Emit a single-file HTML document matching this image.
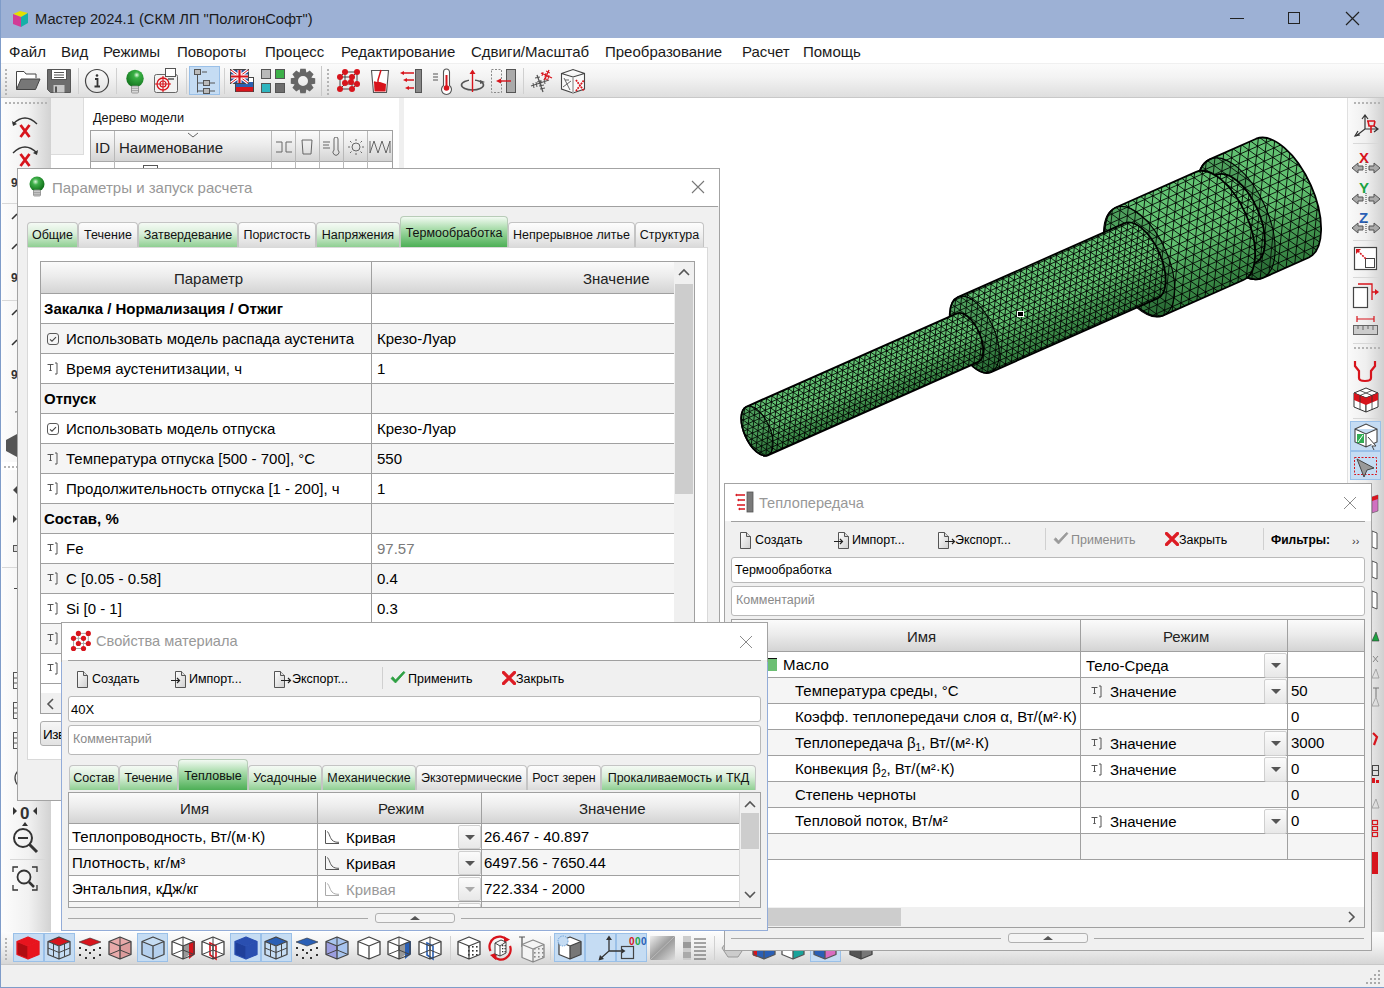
<!DOCTYPE html>
<html><head><meta charset="utf-8">
<style>
*{margin:0;padding:0;box-sizing:border-box}
html,body{width:1384px;height:988px;overflow:hidden;background:#fff;font-family:"Liberation Sans",sans-serif;color:#000}
.a{position:absolute}
.t{position:absolute;white-space:nowrap;line-height:1}
#title{left:0;top:0;width:1384px;height:38px;background:#9db1d5}
#menu{left:1px;top:38px;width:1383px;height:26px;background:#fff;border-bottom:1px solid #f0f0f0}
#menu .t{top:6px;font-size:15px;color:#1a1a1a}
#tb{left:1px;top:64px;width:1383px;height:34px;background:linear-gradient(#fbfbfb,#f3f3f3 40%,#dedede);border-bottom:1px solid #c8c8c8}
.sep{position:absolute;width:1px;background:#c8c8c8}
.hl{position:absolute;background:#cce0f5;border:1px solid #94bde8}
.grip{position:absolute;width:2px;background:repeating-linear-gradient(#a8a8a8 0 1px,transparent 1px 3px)}
.griph{position:absolute;height:2px;background:repeating-linear-gradient(90deg,#a8a8a8 0 1px,transparent 1px 3px)}
/* dialogs */
.dlg{position:absolute;background:#f0f0f0}
.bord{position:absolute;left:0;top:0;right:0;bottom:0;border:1px solid #a3a3a3;z-index:30}
.dlg .cap{position:absolute;left:0;top:0;right:0;background:#fff}
.dlg .capsep{position:absolute;height:1px;background:#a0a0a0}
.captxt{position:absolute;font-size:15px;color:#989898;white-space:nowrap;line-height:1}
.closex{position:absolute;width:16px;height:16px}
.tab{position:absolute;top:0;height:25px;border:1px solid #c4c4c4;border-bottom:none;border-radius:4px 4px 0 0;font-size:12.5px;text-align:center;line-height:24px;white-space:nowrap;color:#111}
.tg{background:linear-gradient(#f4faf4,#d8eed8 45%,#8fcf92)}
.tw{background:linear-gradient(#fdfdfd,#f0f0f0 50%,#dadada)}
.ts{background:linear-gradient(#f2faf2,#a9dcab 40%,#4daf56);border-color:#b8ccb8}
.hdr{position:absolute;background:linear-gradient(#fbfbfb,#ececec 45%,#d4d4d4);}
.row{position:absolute;border-bottom:1px solid #a0a0a0}
.rw{background:#fff}.rg{background:#f5f5f5}
.vl{position:absolute;width:1px;background:#a0a0a0}
.hln{position:absolute;height:1px;background:#a0a0a0}
.f15{font-size:15px}
.field{position:absolute;background:#fff;border:1px solid #b9b9b9;border-radius:3px}
.btnt{position:absolute;font-size:12.5px;white-space:nowrap;line-height:1;color:#000}
.dd{position:absolute;width:23px;background:linear-gradient(#fafafa,#e6e6e6);border:1px solid #c8c8c8;border-radius:2px}
.dd:after{content:"";position:absolute;left:6px;top:10px;border-left:5px solid transparent;border-right:5px solid transparent;border-top:5px solid #555}
</style></head><body>


<!-- window border -->
<div class="a" style="left:0;top:0;width:1px;height:988px;background:#7f9cc9;z-index:50"></div>
<div class="a" style="left:0;top:987px;width:1384px;height:1px;background:#7f9cc9;z-index:50"></div>

<!-- TITLE BAR -->
<div id="title" class="a">
  <svg class="a" style="left:11px;top:9px" width="19" height="19" viewBox="0 0 19 19">
    <path d="M2 5 L9 2 L17 4 L10 8 Z" fill="#e4e000"/>
    <path d="M2 5 L10 8 L10 18 L2 15 Z" fill="#d23c96"/>
    <path d="M10 8 L17 4 L17 14 L10 18 Z" fill="#17b0a8"/>
  </svg>
  <div class="t" style="left:35px;top:12px;font-size:14.7px;color:#1b1b1b">Мастер 2024.1 (СКМ ЛП "ПолигонСофт")</div>
  <div class="a" style="left:1230px;top:18px;width:14px;height:1px;background:#222"></div>
  <div class="a" style="left:1288px;top:12px;width:12px;height:12px;border:1px solid #222"></div>
  <svg class="a" style="left:1345px;top:11px" width="15" height="15"><path d="M1 1L14 14M14 1L1 14" stroke="#222" stroke-width="1.2"/></svg>
</div>

<!-- MENU -->
<div id="menu" class="a">
  <div class="t" style="left:8px">Файл</div>
  <div class="t" style="left:60px">Вид</div>
  <div class="t" style="left:102px">Режимы</div>
  <div class="t" style="left:176px">Повороты</div>
  <div class="t" style="left:264px">Процесс</div>
  <div class="t" style="left:340px">Редактирование</div>
  <div class="t" style="left:470px">Сдвиги/Масштаб</div>
  <div class="t" style="left:604px">Преобразование</div>
  <div class="t" style="left:741px">Расчет</div>
  <div class="t" style="left:802px">Помощь</div>
</div>

<!-- TOOLBAR -->
<div id="tb" class="a"></div>
<div id="tbicons"></div>

<!-- MAIN -->
<div class="a" id="leftbar" style="left:1px;top:98px;width:50px;height:834px;background:linear-gradient(90deg,#fdfdfd,#f1f1f1 55%,#d2d2d2)"></div>
<div class="a" style="left:51px;top:98px;width:33px;height:57px;background:#f0f0f0;border-right:1px solid #dcdcdc;border-bottom:1px solid #dcdcdc"></div>
<div class="a" style="left:399px;top:98px;width:5px;height:834px;background:#efefef"></div>

<!-- right toolbar -->
<div class="a" id="rightbar" style="left:1347px;top:98px;width:37px;height:834px;background:linear-gradient(90deg,#fafafa,#efefef 50%,#d0d0d0);border-left:1px solid #e0e0e0"></div>

<!-- bottom toolbar + status -->
<div class="a" style="left:1px;top:932px;width:1383px;height:33px;background:linear-gradient(#fcfcfc,#f0f0f0 45%,#d6d6d6);border-bottom:1px solid #c8c8c8"></div>
<div class="a" style="left:1px;top:965px;width:1383px;height:22px;background:#f0f0f0"></div>



<div class="dlg" style="left:17px;top:168px;width:703px;height:633px;z-index:10">
<div class="bord"></div>
<div class="cap" style="height:38px"></div>
<div class="capsep" style="left:0;top:38px;width:701px"></div>
<svg class="a" style="left:11px;top:8px" width="18" height="22" viewBox="0 0 18 22"><defs><radialGradient id="gb" cx="0.4" cy="0.35" r="0.6"><stop offset="0" stop-color="#d8f5d8"/><stop offset="0.35" stop-color="#3fb04a"/><stop offset="1" stop-color="#13741c"/></radialGradient></defs><circle cx="9" cy="8" r="7.5" fill="url(#gb)"/><rect x="5.5" y="14" width="7" height="6" rx="1" fill="#c9c9c9" stroke="#8a8a8a" stroke-width="0.8"/><path d="M5.5 16.5h7M5.5 18.3h7" stroke="#8a8a8a" stroke-width="0.6"/></svg>
<div class="captxt" style="left:35px;top:12px">Параметры и запуск расчета</div>
<svg class="a" style="left:674px;top:12px" width="14" height="14"><path d="M1 1L13 13M13 1L1 13" stroke="#777" stroke-width="1.1"/></svg>
<div class="a" style="left:10px;top:79px;width:681px;height:513px;background:#fff;border:1px solid #d9d9d9"></div>
<div class="tab tg" style="left:10px;top:54px;width:51px;height:25px;line-height:24px">Общие</div>
<div class="tab tw" style="left:61px;top:54px;width:60px;height:25px;line-height:24px">Течение</div>
<div class="tab tg" style="left:121px;top:54px;width:100px;height:25px;line-height:24px">Затвердевание</div>
<div class="tab tw" style="left:221px;top:54px;width:78px;height:25px;line-height:24px">Пористость</div>
<div class="tab tg" style="left:299px;top:54px;width:84px;height:25px;line-height:24px">Напряжения</div>
<div class="tab ts" style="left:383px;top:48px;width:108px;height:31px;line-height:33px">Термообработка</div>
<div class="tab tw" style="left:491px;top:54px;width:127px;height:25px;line-height:24px">Непрерывное литье</div>
<div class="tab tw" style="left:618px;top:54px;width:69px;height:25px;line-height:24px">Структура</div>
<div class="a" style="left:23px;top:93px;width:655px;height:453px;border:1px solid #a0a0a0;background:#fff;overflow:hidden">
<div class="hdr" style="left:0;top:0;width:633px;height:32px;border-bottom:1px solid #a0a0a0"></div>
<div class="t f15" style="left:133px;top:9px;color:#222">Параметр</div>
<div class="t f15" style="left:542px;top:9px;color:#222">Значение</div>
<div class="row rw" style="left:0;top:32px;width:633px;height:30px"></div>
<div class="t f15" style="left:3px;top:39px;font-weight:bold">Закалка / Нормализация / Отжиг</div>
<div class="row rg" style="left:0;top:62px;width:633px;height:30px"></div>
<div class="a" style="left:6px;top:71px;width:12px;height:12px;border:1.3px solid #5a5a5a;border-radius:3px"></div><svg class="a" style="left:8px;top:73px" width="8" height="8"><path d="M1 4.3L3 6.2L7 2.2" stroke="#444" stroke-width="1.1" fill="none"/></svg>
<div class="t f15" style="left:25px;top:69px">Использовать модель распада аустенита</div>
<div class="t f15" style="left:336px;top:69px;color:#000">Крезо-Луар</div>
<div class="row rw" style="left:0;top:92px;width:633px;height:30px"></div>
<svg class="a" style="left:6px;top:100px" width="12" height="13" viewBox="0 0 12 13"><path d="M0.5 2.5H6.5M3.5 2.5V8.5M2.3 8.5H4.7" stroke="#555" stroke-width="1" fill="none"/><path d="M8 1H10V12H8" stroke="#555" stroke-width="1" fill="none"/></svg>
<div class="t f15" style="left:25px;top:99px">Время аустенитизации, ч</div>
<div class="t f15" style="left:336px;top:99px;color:#000">1</div>
<div class="row rg" style="left:0;top:122px;width:633px;height:30px"></div>
<div class="t f15" style="left:3px;top:129px;font-weight:bold">Отпуск</div>
<div class="row rw" style="left:0;top:152px;width:633px;height:30px"></div>
<div class="a" style="left:6px;top:161px;width:12px;height:12px;border:1.3px solid #5a5a5a;border-radius:3px"></div><svg class="a" style="left:8px;top:163px" width="8" height="8"><path d="M1 4.3L3 6.2L7 2.2" stroke="#444" stroke-width="1.1" fill="none"/></svg>
<div class="t f15" style="left:25px;top:159px">Использовать модель отпуска</div>
<div class="t f15" style="left:336px;top:159px;color:#000">Крезо-Луар</div>
<div class="row rg" style="left:0;top:182px;width:633px;height:30px"></div>
<svg class="a" style="left:6px;top:190px" width="12" height="13" viewBox="0 0 12 13"><path d="M0.5 2.5H6.5M3.5 2.5V8.5M2.3 8.5H4.7" stroke="#555" stroke-width="1" fill="none"/><path d="M8 1H10V12H8" stroke="#555" stroke-width="1" fill="none"/></svg>
<div class="t f15" style="left:25px;top:189px">Температура отпуска [500 - 700], °C</div>
<div class="t f15" style="left:336px;top:189px;color:#000">550</div>
<div class="row rw" style="left:0;top:212px;width:633px;height:30px"></div>
<svg class="a" style="left:6px;top:220px" width="12" height="13" viewBox="0 0 12 13"><path d="M0.5 2.5H6.5M3.5 2.5V8.5M2.3 8.5H4.7" stroke="#555" stroke-width="1" fill="none"/><path d="M8 1H10V12H8" stroke="#555" stroke-width="1" fill="none"/></svg>
<div class="t f15" style="left:25px;top:219px">Продолжительность отпуска [1 - 200], ч</div>
<div class="t f15" style="left:336px;top:219px;color:#000">1</div>
<div class="row rg" style="left:0;top:242px;width:633px;height:30px"></div>
<div class="t f15" style="left:3px;top:249px;font-weight:bold">Состав, %</div>
<div class="row rw" style="left:0;top:272px;width:633px;height:30px"></div>
<svg class="a" style="left:6px;top:280px" width="12" height="13" viewBox="0 0 12 13"><path d="M0.5 2.5H6.5M3.5 2.5V8.5M2.3 8.5H4.7" stroke="#555" stroke-width="1" fill="none"/><path d="M8 1H10V12H8" stroke="#555" stroke-width="1" fill="none"/></svg>
<div class="t f15" style="left:25px;top:279px">Fe</div>
<div class="t f15" style="left:336px;top:279px;color:#7a7a7a">97.57</div>
<div class="row rg" style="left:0;top:302px;width:633px;height:30px"></div>
<svg class="a" style="left:6px;top:310px" width="12" height="13" viewBox="0 0 12 13"><path d="M0.5 2.5H6.5M3.5 2.5V8.5M2.3 8.5H4.7" stroke="#555" stroke-width="1" fill="none"/><path d="M8 1H10V12H8" stroke="#555" stroke-width="1" fill="none"/></svg>
<div class="t f15" style="left:25px;top:309px">C [0.05 - 0.58]</div>
<div class="t f15" style="left:336px;top:309px;color:#000">0.4</div>
<div class="row rw" style="left:0;top:332px;width:633px;height:30px"></div>
<svg class="a" style="left:6px;top:340px" width="12" height="13" viewBox="0 0 12 13"><path d="M0.5 2.5H6.5M3.5 2.5V8.5M2.3 8.5H4.7" stroke="#555" stroke-width="1" fill="none"/><path d="M8 1H10V12H8" stroke="#555" stroke-width="1" fill="none"/></svg>
<div class="t f15" style="left:25px;top:339px">Si [0 - 1]</div>
<div class="t f15" style="left:336px;top:339px;color:#000">0.3</div>
<div class="row rg" style="left:0;top:362px;width:633px;height:30px"></div>
<svg class="a" style="left:6px;top:370px" width="12" height="13" viewBox="0 0 12 13"><path d="M0.5 2.5H6.5M3.5 2.5V8.5M2.3 8.5H4.7" stroke="#555" stroke-width="1" fill="none"/><path d="M8 1H10V12H8" stroke="#555" stroke-width="1" fill="none"/></svg>
<div class="t f15" style="left:25px;top:369px"></div>
<div class="row rw" style="left:0;top:392px;width:633px;height:30px"></div>
<svg class="a" style="left:6px;top:400px" width="12" height="13" viewBox="0 0 12 13"><path d="M0.5 2.5H6.5M3.5 2.5V8.5M2.3 8.5H4.7" stroke="#555" stroke-width="1" fill="none"/><path d="M8 1H10V12H8" stroke="#555" stroke-width="1" fill="none"/></svg>
<div class="t f15" style="left:25px;top:399px"></div>
<div class="vl" style="left:330px;top:0;height:431px"></div>
<div class="a" style="left:633px;top:0;width:20px;height:431px;background:#f0f0f0"></div>
<svg class="a" style="left:637px;top:6px" width="12" height="8"><path d="M1 7L6 2L11 7" stroke="#555" stroke-width="1.6" fill="none"/></svg>
<div class="a" style="left:634px;top:22px;width:18px;height:210px;background:#cdcdcd"></div>
<div class="a" style="left:0;top:431px;width:633px;height:21px;background:#f0f0f0"></div>
<svg class="a" style="left:4px;top:436px" width="10" height="12"><path d="M8 1L3 6L8 11" stroke="#555" stroke-width="1.6" fill="none"/></svg>
</div>
<div class="a" style="left:23px;top:553px;width:120px;height:25px;border:1px solid #adadad;border-radius:3px;background:linear-gradient(#f6f6f6,#e2e2e2)"></div>
<div class="t" style="left:26px;top:560px;font-size:13.5px;letter-spacing:-0.4px">Известные</div>
</div>
<div class="dlg" style="left:61px;top:622px;width:707px;height:309px;z-index:20">
<div class="bord"></div>
<div class="a" style="left:0;top:40px;width:1px;height:269px;background:#93acd8;z-index:31"></div>
<div class="a" style="right:0;top:40px;width:1px;height:269px;background:#93acd8;z-index:31"></div>
<div class="a" style="left:0;bottom:0;width:707px;height:1px;background:#93acd8;z-index:31"></div>
<div class="cap" style="height:38px"></div>
<div class="capsep" style="left:7px;top:38px;width:693px"></div>
<svg class="a" style="left:3px;top:4px" width="30" height="28" viewBox="64 626 30 28"><path d="M78.4 633.4H88.3M73.5 638.3H83.5M78.4 643.5H88.3M73.5 648.5H83.5M73.5 638.3V648.5M83.5 638.3V648.5M78.4 633.4V643.5M88.3 633.4V643.5" stroke="#aaa" stroke-width="1"/><circle cx="78.4" cy="633.4" r="2.6" fill="#d7141c"/><circle cx="88.3" cy="633.4" r="2.6" fill="#d7141c"/><circle cx="73.5" cy="638.3" r="2.6" fill="#d7141c"/><circle cx="83.5" cy="638.3" r="2.6" fill="#d7141c"/><circle cx="78.4" cy="643.5" r="2.6" fill="#d7141c"/><circle cx="88.3" cy="643.5" r="2.6" fill="#d7141c"/><circle cx="73.5" cy="648.5" r="2.6" fill="#d7141c"/><circle cx="83.5" cy="648.5" r="2.6" fill="#d7141c"/></svg>
<div class="captxt" style="left:35px;top:12px;font-size:14.6px">Свойства материала</div>
<svg class="a" style="left:678px;top:13px" width="14" height="14"><path d="M1 1L13 13M13 1L1 13" stroke="#8a8a8a" stroke-width="1"/></svg>
<svg class="a" style="left:15px;top:49px" width="18" height="17" viewBox="0 0 18 17"><defs><linearGradient id="docg" x1="0" y1="0" x2="1" y2="1"><stop offset="0" stop-color="#fff"/><stop offset="1" stop-color="#cfcfcf"/></linearGradient></defs><path d="M1.5 0.5H7.5L11.5 4.5V16.5H1.5Z" fill="url(#docg)" stroke="#555" stroke-width="1"/><path d="M7.5 0.5V4.5H11.5" fill="#ddd" stroke="#555" stroke-width="1"/></svg>
<div class="btnt" style="left:31px;top:51px">Создать</div>
<svg class="a" style="left:110px;top:49px" width="18" height="17" viewBox="0 0 18 17"><defs><linearGradient id="docg" x1="0" y1="0" x2="1" y2="1"><stop offset="0" stop-color="#fff"/><stop offset="1" stop-color="#cfcfcf"/></linearGradient></defs><path d="M4.5 0.5H10.5L14.5 4.5V16.5H4.5Z" fill="url(#docg)" stroke="#555" stroke-width="1"/><path d="M10.5 0.5V4.5H14.5" fill="#ddd" stroke="#555" stroke-width="1"/><path d="M0 9.5H8M6 7L8.5 9.5L6 12" stroke="#222" stroke-width="1.2" fill="none"/></svg>
<div class="btnt" style="left:128px;top:51px">Импорт...</div>
<svg class="a" style="left:213px;top:49px" width="18" height="17" viewBox="0 0 18 17"><defs><linearGradient id="docg" x1="0" y1="0" x2="1" y2="1"><stop offset="0" stop-color="#fff"/><stop offset="1" stop-color="#cfcfcf"/></linearGradient></defs><path d="M0.5 0.5H6.5L10.5 4.5V16.5H0.5Z" fill="url(#docg)" stroke="#555" stroke-width="1"/><path d="M6.5 0.5V4.5H10.5" fill="#ddd" stroke="#555" stroke-width="1"/><path d="M7 9.5H16M14 7L16.5 9.5L14 12" stroke="#222" stroke-width="1.2" fill="none"/></svg>
<div class="btnt" style="left:231px;top:51px">Экспорт...</div>
<div class="a" style="left:321px;top:45px;width:1px;height:22px;background:#d0d0d0"></div>
<svg class="a" style="left:329px;top:49px" width="16" height="14" viewBox="0 0 16 14"><path d="M1 7.5L5.5 12L15 1.5L13.5 0.5L5.5 9L2.8 5.8Z" fill="#2ea043" stroke="#2ea043" stroke-width="0.8" stroke-linejoin="round"/></svg>
<div class="btnt" style="left:347px;top:51px">Применить</div>
<svg class="a" style="left:441px;top:49px" width="14" height="14" viewBox="0 0 14 14"><path d="M1.5 1.5L12.5 12.5M12.5 1.5L1.5 12.5" stroke="#dd1c24" stroke-width="3.2" stroke-linecap="round"/></svg>
<div class="btnt" style="left:455px;top:51px">Закрыть</div>
<div class="field" style="left:7px;top:74px;width:693px;height:26px"></div>
<div class="t" style="left:10px;top:81px;font-size:13px">40X</div>
<div class="field" style="left:7px;top:103px;width:693px;height:30px"></div>
<div class="t" style="left:12px;top:111px;font-size:12.5px;color:#8a8a8a">Комментарий</div>
<div class="tab tg" style="left:8px;top:143px;width:50px;height:25px;line-height:24px">Состав</div>
<div class="tab tg" style="left:58px;top:143px;width:59px;height:25px;line-height:24px">Течение</div>
<div class="tab ts" style="left:117px;top:137px;width:70px;height:31px;line-height:33px">Тепловые</div>
<div class="tab tg" style="left:187px;top:143px;width:74px;height:25px;line-height:24px">Усадочные</div>
<div class="tab tg" style="left:261px;top:143px;width:94px;height:25px;line-height:24px">Механические</div>
<div class="tab tw" style="left:355px;top:143px;width:111px;height:25px;line-height:24px">Экзотермические</div>
<div class="tab tw" style="left:466px;top:143px;width:74px;height:25px;line-height:24px">Рост зерен</div>
<div class="tab tg" style="left:540px;top:143px;width:155px;height:25px;line-height:24px">Прокаливаемость и ТКД</div>
<div class="a" style="left:7px;top:170px;width:693px;height:116px;border:1px solid #a0a0a0;background:#fff;overflow:hidden">
<div class="hdr" style="left:0;top:0;width:670px;height:31px;border-bottom:1px solid #a0a0a0"></div>
<div class="t f15" style="left:111px;top:8px;color:#222">Имя</div>
<div class="t f15" style="left:309px;top:8px;color:#222">Режим</div>
<div class="t f15" style="left:510px;top:8px;color:#222">Значение</div>
<div class="row rw" style="left:0;top:31px;width:670px;height:26px"></div>
<div class="t f15" style="left:3px;top:36px">Теплопроводность, Вт/(м·К)</div>
<svg class="a" style="left:255px;top:37px" width="16" height="15" viewBox="0 0 16 15"><path d="M1.5 0V13.5H15" stroke="#555" stroke-width="1" fill="none"/><path d="M3 1.5C5 2 5.5 7 8 10C10 12 12 12.3 15 12.3" stroke="#555" stroke-width="1" fill="none"/></svg>
<div class="t f15" style="left:277px;top:37px;color:#000">Кривая</div>
<div class="a" style="left:389px;top:32px;width:23px;height:24px;background:linear-gradient(#fbfbfb,#e8e8e8);border:1px solid #cfcfcf;border-radius:2px"><div class="a" style="left:6px;top:9px;border-left:5px solid transparent;border-right:5px solid transparent;border-top:5px solid #555"></div></div>
<div class="t f15" style="left:415px;top:36px">26.467 - 40.897</div>
<div class="row rg" style="left:0;top:57px;width:670px;height:26px"></div>
<div class="t f15" style="left:3px;top:62px">Плотность, кг/м³</div>
<svg class="a" style="left:255px;top:63px" width="16" height="15" viewBox="0 0 16 15"><path d="M1.5 0V13.5H15" stroke="#555" stroke-width="1" fill="none"/><path d="M3 1.5C5 2 5.5 7 8 10C10 12 12 12.3 15 12.3" stroke="#555" stroke-width="1" fill="none"/></svg>
<div class="t f15" style="left:277px;top:63px;color:#000">Кривая</div>
<div class="a" style="left:389px;top:58px;width:23px;height:24px;background:linear-gradient(#fbfbfb,#e8e8e8);border:1px solid #cfcfcf;border-radius:2px"><div class="a" style="left:6px;top:9px;border-left:5px solid transparent;border-right:5px solid transparent;border-top:5px solid #555"></div></div>
<div class="t f15" style="left:415px;top:62px">6497.56 - 7650.44</div>
<div class="row rw" style="left:0;top:83px;width:670px;height:26px"></div>
<div class="t f15" style="left:3px;top:88px">Энтальпия, кДж/кг</div>
<svg class="a" style="left:255px;top:89px" width="16" height="15" viewBox="0 0 16 15"><path d="M1.5 0V13.5H15" stroke="#aaa" stroke-width="1" fill="none"/><path d="M3 1.5C5 2 5.5 7 8 10C10 12 12 12.3 15 12.3" stroke="#aaa" stroke-width="1" fill="none"/></svg>
<div class="t f15" style="left:277px;top:89px;color:#999">Кривая</div>
<div class="a" style="left:389px;top:84px;width:23px;height:24px;background:linear-gradient(#fbfbfb,#e8e8e8);border:1px solid #cfcfcf;border-radius:2px"><div class="a" style="left:6px;top:9px;border-left:5px solid transparent;border-right:5px solid transparent;border-top:5px solid #aaa"></div></div>
<div class="t f15" style="left:415px;top:88px">722.334 - 2000</div>
<div class="row rg" style="left:0;top:109px;width:670px;height:26px"></div>
<div class="a" style="left:389px;top:110px;width:23px;height:24px;background:linear-gradient(#fbfbfb,#e8e8e8);border:1px solid #cfcfcf;border-radius:2px"><div class="a" style="left:6px;top:9px;border-left:5px solid transparent;border-right:5px solid transparent;border-top:5px solid #555"></div></div>
<div class="vl" style="left:248px;top:0;height:116px"></div>
<div class="vl" style="left:412px;top:0;height:116px"></div>
<div class="a" style="left:670px;top:0;width:22px;height:116px;background:#f0f0f0;border-left:1px solid #d8d8d8"></div>
<svg class="a" style="left:675px;top:7px" width="12" height="8"><path d="M1 7L6 2L11 7" stroke="#555" stroke-width="1.6" fill="none"/></svg>
<div class="a" style="left:672px;top:20px;width:18px;height:36px;background:#cdcdcd"></div>
<svg class="a" style="left:675px;top:98px" width="12" height="8"><path d="M1 1L6 6L11 1" stroke="#555" stroke-width="1.6" fill="none"/></svg>
</div>
<div class="a" style="left:7px;top:296px;width:300px;height:1px;background:#a8a8a8"></div>
<div class="a" style="left:400px;top:296px;width:300px;height:1px;background:#a8a8a8"></div>
<div class="a" style="left:314px;top:291px;width:80px;height:10px;background:#f4f4f4;border:1px solid #b0b0b0;border-radius:3px"></div>
<div class="a" style="left:349px;top:294px;border-left:5px solid transparent;border-right:5px solid transparent;border-bottom:4px solid #555"></div>
</div>
<div class="dlg" style="left:724px;top:483px;width:648px;height:468px;z-index:15">
<div class="bord"></div>
<div class="cap" style="height:38px"></div>
<div class="capsep" style="left:7px;top:38px;width:634px"></div>
<svg class="a" style="left:10px;top:8px" width="22" height="22" viewBox="0 0 22 22"><rect x="13" y="1" width="6" height="20" fill="#7a7a7a" stroke="#555" stroke-width="0.8"/><path d="M11 4H3M11 9H5M11 14H3M11 18H6" stroke="#d7141c" stroke-width="1.3"/><path d="M3 2.5L1 4L3 5.5ZM5 7.5L3 9L5 10.5ZM6 16.5L4 18L6 19.5Z" fill="#d7141c"/></svg>
<div class="captxt" style="left:35px;top:13px;font-size:14.6px">Теплопередача</div>
<svg class="a" style="left:619px;top:13px" width="14" height="14"><path d="M1 1L13 13M13 1L1 13" stroke="#8a8a8a" stroke-width="1"/></svg>
<svg class="a" style="left:15px;top:49px" width="18" height="17" viewBox="0 0 18 17"><defs><linearGradient id="docg" x1="0" y1="0" x2="1" y2="1"><stop offset="0" stop-color="#fff"/><stop offset="1" stop-color="#cfcfcf"/></linearGradient></defs><path d="M1.5 0.5H7.5L11.5 4.5V16.5H1.5Z" fill="url(#docg)" stroke="#555" stroke-width="1"/><path d="M7.5 0.5V4.5H11.5" fill="#ddd" stroke="#555" stroke-width="1"/></svg>
<div class="btnt" style="left:31px;top:51px">Создать</div>
<svg class="a" style="left:110px;top:49px" width="18" height="17" viewBox="0 0 18 17"><defs><linearGradient id="docg" x1="0" y1="0" x2="1" y2="1"><stop offset="0" stop-color="#fff"/><stop offset="1" stop-color="#cfcfcf"/></linearGradient></defs><path d="M4.5 0.5H10.5L14.5 4.5V16.5H4.5Z" fill="url(#docg)" stroke="#555" stroke-width="1"/><path d="M10.5 0.5V4.5H14.5" fill="#ddd" stroke="#555" stroke-width="1"/><path d="M0 9.5H8M6 7L8.5 9.5L6 12" stroke="#222" stroke-width="1.2" fill="none"/></svg>
<div class="btnt" style="left:128px;top:51px">Импорт...</div>
<svg class="a" style="left:214px;top:49px" width="18" height="17" viewBox="0 0 18 17"><defs><linearGradient id="docg" x1="0" y1="0" x2="1" y2="1"><stop offset="0" stop-color="#fff"/><stop offset="1" stop-color="#cfcfcf"/></linearGradient></defs><path d="M0.5 0.5H6.5L10.5 4.5V16.5H0.5Z" fill="url(#docg)" stroke="#555" stroke-width="1"/><path d="M6.5 0.5V4.5H10.5" fill="#ddd" stroke="#555" stroke-width="1"/><path d="M7 9.5H16M14 7L16.5 9.5L14 12" stroke="#222" stroke-width="1.2" fill="none"/></svg>
<div class="btnt" style="left:231px;top:51px">Экспорт...</div>
<div class="a" style="left:321px;top:45px;width:1px;height:22px;background:#d0d0d0"></div>
<svg class="a" style="left:329px;top:49px" width="16" height="14" viewBox="0 0 16 14"><path d="M1 7.5L5.5 12L15 1.5L13.5 0.5L5.5 9L2.8 5.8Z" fill="#9a9a9a" stroke="#9a9a9a" stroke-width="0.8" stroke-linejoin="round"/></svg>
<div class="btnt" style="left:347px;top:51px;color:#8a8a8a">Применить</div>
<svg class="a" style="left:441px;top:49px" width="14" height="14" viewBox="0 0 14 14"><path d="M1.5 1.5L12.5 12.5M12.5 1.5L1.5 12.5" stroke="#dd1c24" stroke-width="3.2" stroke-linecap="round"/></svg>
<div class="btnt" style="left:455px;top:51px">Закрыть</div>
<div class="a" style="left:539px;top:45px;width:1px;height:22px;background:#d0d0d0"></div>
<div class="btnt" style="left:547px;top:51px;font-weight:bold;font-size:12px">Фильтры:</div>
<div class="t" style="left:628px;top:53px;font-size:11px;color:#333">››</div>
<div class="field" style="left:7px;top:74px;width:634px;height:26px"></div>
<div class="t" style="left:11px;top:81px;font-size:12.5px">Термообработка</div>
<div class="field" style="left:7px;top:103px;width:634px;height:30px"></div>
<div class="t" style="left:12px;top:111px;font-size:12.5px;color:#8a8a8a">Комментарий</div>
<div class="a" style="left:7px;top:136px;width:634px;height:309px;border:1px solid #a0a0a0;background:#fff;overflow:hidden">
<div class="hdr" style="left:0;top:0;width:632px;height:32px;border-bottom:1px solid #a0a0a0"></div>
<div class="t f15" style="left:175px;top:9px;color:#222">Имя</div>
<div class="t f15" style="left:431px;top:9px;color:#222">Режим</div>
<div class="row rw" style="left:0;top:32px;width:632px;height:26px"></div>
<div class="a" style="left:35px;top:38px;width:10px;height:13px;background:#6cbf73;border-top:1px solid #111"></div>
<div class="t f15" style="left:51px;top:37px">Масло</div>
<div class="t f15" style="left:354px;top:38px">Тело-Среда</div>
<div class="a" style="left:532px;top:33px;width:23px;height:25px;background:linear-gradient(#fbfbfb,#e8e8e8);border:1px solid #cfcfcf;border-radius:2px"><div class="a" style="left:6px;top:9px;border-left:5px solid transparent;border-right:5px solid transparent;border-top:5px solid #555"></div></div>
<div class="row rg" style="left:0;top:58px;width:632px;height:26px"></div>
<div class="t f15" style="left:63px;top:63px">Температура среды, °C</div>
<svg class="a" style="left:359px;top:65px" width="12" height="13" viewBox="0 0 12 13"><path d="M0.5 2.5H6.5M3.5 2.5V8.5M2.3 8.5H4.7" stroke="#555" stroke-width="1" fill="none"/><path d="M8 1H10V12H8" stroke="#555" stroke-width="1" fill="none"/></svg>
<div class="t f15" style="left:378px;top:64px">Значение</div>
<div class="a" style="left:532px;top:59px;width:23px;height:25px;background:linear-gradient(#fbfbfb,#e8e8e8);border:1px solid #cfcfcf;border-radius:2px"><div class="a" style="left:6px;top:9px;border-left:5px solid transparent;border-right:5px solid transparent;border-top:5px solid #555"></div></div>
<div class="t f15" style="left:559px;top:63px">50</div>
<div class="row rw" style="left:0;top:84px;width:632px;height:26px"></div>
<div class="t f15" style="left:63px;top:89px">Коэфф. теплопередачи слоя α, Вт/(м²·К)</div>
<div class="t f15" style="left:559px;top:89px">0</div>
<div class="row rg" style="left:0;top:110px;width:632px;height:26px"></div>
<div class="t f15" style="left:63px;top:115px">Теплопередача β<span style='font-size:10px;position:relative;top:3px'>1</span>, Вт/(м²·К)</div>
<svg class="a" style="left:359px;top:117px" width="12" height="13" viewBox="0 0 12 13"><path d="M0.5 2.5H6.5M3.5 2.5V8.5M2.3 8.5H4.7" stroke="#555" stroke-width="1" fill="none"/><path d="M8 1H10V12H8" stroke="#555" stroke-width="1" fill="none"/></svg>
<div class="t f15" style="left:378px;top:116px">Значение</div>
<div class="a" style="left:532px;top:111px;width:23px;height:25px;background:linear-gradient(#fbfbfb,#e8e8e8);border:1px solid #cfcfcf;border-radius:2px"><div class="a" style="left:6px;top:9px;border-left:5px solid transparent;border-right:5px solid transparent;border-top:5px solid #555"></div></div>
<div class="t f15" style="left:559px;top:115px">3000</div>
<div class="row rw" style="left:0;top:136px;width:632px;height:26px"></div>
<div class="t f15" style="left:63px;top:141px">Конвекция β<span style='font-size:10px;position:relative;top:3px'>2</span>, Вт/(м²·К)</div>
<svg class="a" style="left:359px;top:143px" width="12" height="13" viewBox="0 0 12 13"><path d="M0.5 2.5H6.5M3.5 2.5V8.5M2.3 8.5H4.7" stroke="#555" stroke-width="1" fill="none"/><path d="M8 1H10V12H8" stroke="#555" stroke-width="1" fill="none"/></svg>
<div class="t f15" style="left:378px;top:142px">Значение</div>
<div class="a" style="left:532px;top:137px;width:23px;height:25px;background:linear-gradient(#fbfbfb,#e8e8e8);border:1px solid #cfcfcf;border-radius:2px"><div class="a" style="left:6px;top:9px;border-left:5px solid transparent;border-right:5px solid transparent;border-top:5px solid #555"></div></div>
<div class="t f15" style="left:559px;top:141px">0</div>
<div class="row rg" style="left:0;top:162px;width:632px;height:26px"></div>
<div class="t f15" style="left:63px;top:167px">Степень черноты</div>
<div class="t f15" style="left:559px;top:167px">0</div>
<div class="row rw" style="left:0;top:188px;width:632px;height:26px"></div>
<div class="t f15" style="left:63px;top:193px">Тепловой поток, Вт/м²</div>
<svg class="a" style="left:359px;top:195px" width="12" height="13" viewBox="0 0 12 13"><path d="M0.5 2.5H6.5M3.5 2.5V8.5M2.3 8.5H4.7" stroke="#555" stroke-width="1" fill="none"/><path d="M8 1H10V12H8" stroke="#555" stroke-width="1" fill="none"/></svg>
<div class="t f15" style="left:378px;top:194px">Значение</div>
<div class="a" style="left:532px;top:189px;width:23px;height:25px;background:linear-gradient(#fbfbfb,#e8e8e8);border:1px solid #cfcfcf;border-radius:2px"><div class="a" style="left:6px;top:9px;border-left:5px solid transparent;border-right:5px solid transparent;border-top:5px solid #555"></div></div>
<div class="t f15" style="left:559px;top:193px">0</div>
<div class="row rg" style="left:0;top:214px;width:632px;height:26px"></div>
<div class="vl" style="left:348px;top:0;height:239px"></div>
<div class="vl" style="left:555px;top:0;height:239px"></div>
<div class="a" style="left:0;top:287px;width:632px;height:20px;background:#f0f0f0"></div>
<div class="a" style="left:0;top:288px;width:169px;height:18px;background:#cdcdcd"></div>
<svg class="a" style="left:615px;top:291px" width="10" height="12"><path d="M2 1L7 6L2 11" stroke="#555" stroke-width="1.6" fill="none"/></svg>
</div>
<div class="a" style="left:7px;top:455px;width:270px;height:1px;background:#a8a8a8"></div>
<div class="a" style="left:370px;top:455px;width:270px;height:1px;background:#a8a8a8"></div>
<div class="a" style="left:284px;top:450px;width:80px;height:10px;background:#f4f4f4;border:1px solid #b0b0b0;border-radius:3px"></div>
<div class="a" style="left:319px;top:453px;border-left:5px solid transparent;border-right:5px solid transparent;border-bottom:4px solid #555"></div>
</div>
<svg class="a" style="left:0px;top:64px;z-index:2" width="600" height="34" viewBox="0 64 600 34"><rect x="5" y="69" width="2" height="2" fill="#b4b4b4"/><rect x="5" y="73" width="2" height="2" fill="#b4b4b4"/><rect x="5" y="77" width="2" height="2" fill="#b4b4b4"/><rect x="5" y="81" width="2" height="2" fill="#b4b4b4"/><rect x="5" y="85" width="2" height="2" fill="#b4b4b4"/><rect x="5" y="89" width="2" height="2" fill="#b4b4b4"/><rect x="5" y="93" width="2" height="2" fill="#b4b4b4"/><path d="M16.5 89.5V71.5H24L26 74H36V78" fill="#fff" stroke="#444" stroke-width="1"/><path d="M16.5 89.5L21 79H40L35.5 89.5Z" fill="#777" stroke="#444" stroke-width="1"/><path d="M47.5 69.5H70.5V92.5H50.5L47.5 89.5Z" fill="#6d6d6d" stroke="#555"/><rect x="51.5" y="69.5" width="15" height="10" fill="#fff" stroke="#555"/><path d="M54 72.5H64M54 75H64M54 77.5H64" stroke="#555"/><rect x="53.5" y="85" width="11" height="7.5" fill="#c8c8c8"/><rect x="55" y="86.5" width="2" height="6" fill="#555"/><rect x="78" y="68" width="1" height="26" fill="#d0d0d0"/><circle cx="97" cy="81" r="11.5" fill="none" stroke="#444" stroke-width="1.2"/><circle cx="97" cy="75.5" r="1.3" fill="#333"/><path d="M95 79H97.5V86.5M94.5 86.5H100" stroke="#333" stroke-width="1.8" fill="none"/><rect x="116" y="68" width="1" height="26" fill="#d0d0d0"/><defs><radialGradient id="gbt" cx="0.6" cy="0.3" r="0.7"><stop offset="0" stop-color="#e6fbe6"/><stop offset="0.25" stop-color="#39b044"/><stop offset="1" stop-color="#15761f"/></radialGradient></defs><circle cx="135" cy="78.5" r="8.7" fill="url(#gbt)"/><rect x="131.5" y="86" width="7" height="7" rx="1" fill="#ddd" stroke="#888" stroke-width="0.8"/><path d="M131.5 88.3H138.5M131.5 90.6H138.5" stroke="#888" stroke-width="0.7"/><rect x="154.5" y="74.5" width="23" height="18" rx="2" fill="#f2f2f2" stroke="#666"/><circle cx="163" cy="84" r="6" fill="none" stroke="#d7141c" stroke-width="1.3"/><circle cx="163" cy="84" r="3" fill="none" stroke="#d7141c" stroke-width="1.1"/><path d="M155 84H171M163 76V92" stroke="#d7141c" stroke-width="1.1"/><rect x="165.5" y="68.5" width="10" height="8" fill="#fff" stroke="#555"/><path d="M168 79H174" stroke="#555" stroke-width="1.5"/><rect x="186" y="68" width="1" height="26" fill="#d0d0d0"/><rect x="189.5" y="66.5" width="30" height="28" fill="#c5dcf3" stroke="#9ac0e8"/><rect x="194.5" y="69.5" width="6" height="5" fill="#bbb" stroke="#555"/><path d="M197.5 75V92.5M197.5 83H203M197.5 91H203M202 72H207M210 83H215M210 91H215" stroke="#555" stroke-width="1"/><rect x="203.5" y="80.5" width="6" height="5" fill="#bbb" stroke="#555"/><rect x="203.5" y="88.5" width="6" height="5" fill="#bbb" stroke="#555"/><rect x="224" y="68" width="1" height="26" fill="#d0d0d0"/><rect x="235.5" y="77.5" width="18" height="14" fill="#fff" stroke="#444"/><rect x="236" y="82" width="17" height="5" fill="#2a5fb0"/><rect x="236" y="87" width="17" height="4.5" fill="#d7141c"/><rect x="230.5" y="69.5" width="18" height="14" fill="#2a4f9a" stroke="#444"/><path d="M231 70L248 83M248 70L231 83" stroke="#fff" stroke-width="3"/><path d="M231 70L248 83M248 70L231 83" stroke="#d7141c" stroke-width="1"/><path d="M239.5 70V83M231 76.5H248" stroke="#fff" stroke-width="4"/><path d="M239.5 70V83M231 76.5H248" stroke="#d7141c" stroke-width="2.2"/><rect x="261.5" y="69.5" width="9" height="9" fill="#b9b9b9" stroke="#555"/><rect x="275.5" y="69.5" width="9" height="9" fill="#3db049" stroke="#555"/><rect x="261.5" y="83.5" width="9" height="9" fill="#2fb5bf" stroke="#555"/><rect x="275.5" y="83.5" width="9" height="9" fill="#6d6d6d" stroke="#555"/><path d="M315.2 78.3 L315.2 83.7 L311.7 84.3 L311.5 84.8 L313.6 87.7 L309.7 91.6 L306.8 89.5 L306.3 89.7 L305.7 93.2 L300.3 93.2 L299.7 89.7 L299.2 89.5 L296.3 91.6 L292.4 87.7 L294.5 84.8 L294.3 84.3 L290.8 83.7 L290.8 78.3 L294.3 77.7 L294.5 77.2 L292.4 74.3 L296.3 70.4 L299.2 72.5 L299.7 72.3 L300.3 68.8 L305.7 68.8 L306.3 72.3 L306.8 72.5 L309.7 70.4 L313.6 74.3 L311.5 77.2 L311.7 77.7Z M308 81 A5 5 0 1 0 298 81 A5 5 0 1 0 308 81Z" fill="#666" fill-rule="evenodd"/><rect x="321" y="66" width="1" height="30" fill="#c8c8c8"/><rect x="327" y="69" width="2" height="2" fill="#b4b4b4"/><rect x="327" y="73" width="2" height="2" fill="#b4b4b4"/><rect x="327" y="77" width="2" height="2" fill="#b4b4b4"/><rect x="327" y="81" width="2" height="2" fill="#b4b4b4"/><rect x="327" y="85" width="2" height="2" fill="#b4b4b4"/><rect x="327" y="89" width="2" height="2" fill="#b4b4b4"/><rect x="327" y="93" width="2" height="2" fill="#b4b4b4"/><path d="M345 72H357V84M340 77H352V89H340ZM345 72L340 77M357 72L352 77M357 84L352 89M345 72V84L340 89M345 84H357" stroke="#444" stroke-width="1" fill="none"/><circle cx="345" cy="72" r="3" fill="#d7141c"/><circle cx="357" cy="72" r="3" fill="#d7141c"/><circle cx="340" cy="77" r="3" fill="#d7141c"/><circle cx="352" cy="77" r="3" fill="#d7141c"/><circle cx="351" cy="82" r="3" fill="#d7141c"/><circle cx="357" cy="84" r="3" fill="#d7141c"/><circle cx="340" cy="89" r="3" fill="#d7141c"/><circle cx="352" cy="89" r="3" fill="#d7141c"/><circle cx="345" cy="83" r="3" fill="#d7141c"/><path d="M371.5 70.5H388.5L386.5 92.5H373.5Z" fill="#fff" stroke="#555" stroke-width="1.1"/><path d="M374 82L378 83V80L381 70" stroke="#d7141c" stroke-width="1.5" fill="none"/><path d="M374 82H380L386 84L385.5 91.5H374.5Z" fill="#d7141c"/><rect x="415.5" y="69.5" width="6" height="23" fill="#888" stroke="#555"/><path d="M414 73H402M414 80H405M414 88H407" stroke="#d7141c" stroke-width="1.4"/><path d="M400 73L404 71V75ZM403 80L407 78V82ZM405 88L409 86V90Z" fill="#d7141c"/><path d="M433 74H438M433 77H438M433 80H438" stroke="#555" stroke-width="1.2"/><path d="M443.5 72A3 3 0 0 1 449.5 72V85.5A5 5 0 1 1 443.5 85.5Z" fill="#fff" stroke="#555" stroke-width="1.1"/><path d="M446.5 75V87" stroke="#d7141c" stroke-width="2"/><circle cx="446.5" cy="88" r="2.8" fill="#d7141c"/><ellipse cx="472.5" cy="85" rx="11" ry="5" fill="none" stroke="#555" stroke-width="1.6"/><path d="M480 80L485 82L480 84Z" fill="#555"/><rect x="469" y="79" width="6" height="3" fill="#f2f2f2"/><path d="M472.5 72V92" stroke="#d7141c" stroke-width="1.4"/><path d="M469.5 74L472.5 69.5L475.5 74Z" fill="#d7141c"/><rect x="491.5" y="69.5" width="10" height="23" fill="none" stroke="#888" stroke-dasharray="2 1.5"/><rect x="506.5" y="69.5" width="9" height="23" fill="#aaa" stroke="#555"/><path d="M511 81H498" stroke="#d7141c" stroke-width="1.4"/><path d="M496 81L501 78.5V83.5Z" fill="#d7141c"/><rect x="523" y="68" width="1" height="26" fill="#d0d0d0"/><path d="M531 86L549 80M537 75L543 92" stroke="#555" stroke-width="1.3"/><path d="M533 83L534 88M536 82L537 87M540 80L541 85M544 79L545 84M535 78L540 77M537 82L542 81M539 86L544 85M540 89L545 88" stroke="#555" stroke-width="1"/><path d="M541 73L552 78M549 70L544.5 80" stroke="#d7141c" stroke-width="1.3"/><path d="M543 72L542 76M546 73L545 77M549 75L548 79M546 71L550 73M545 75L549 77M544 78L548 80" stroke="#d7141c" stroke-width="1"/><path d="M561.5 73.5L573 69.5L584.5 73.5V89L573 93L561.5 89Z M561.5 73.5L573 77L584.5 73.5" fill="#fafafa" stroke="#444" stroke-width="1.1"/><path d="M573 77V93" stroke="#aaa" stroke-width="1.6"/><path d="M564 78L570 90M563 87L571 81M565 80L569 80" stroke="#666" stroke-width="1"/><path d="M576 80L584 91M576 91L584 80" stroke="#d7141c" stroke-width="1.8" stroke-dasharray="1.8 1"/></svg>
<svg class="a" style="left:700px;top:100px;z-index:1" width="647" height="383" viewBox="700 100 647 383"><defs><clipPath id="c524"><path d="M1256.2 138.7 L1209.6 159.4 A65.0 31.8 66.1 0 0 1262.3 278.2 L1308.9 257.5 A65.0 31.8 66.1 0 0 1256.2 138.7 Z"/></clipPath><linearGradient id="g524" gradientUnits="userSpaceOnUse" x1="1209.6" y1="159.4" x2="1262.3" y2="278.2"><stop offset="0" stop-color="#62c272"/><stop offset="0.5" stop-color="#60bf6f"/><stop offset="1" stop-color="#2f7a3b"/></linearGradient></defs><path d="M1256.2 138.7 L1209.6 159.4 A65.0 31.8 66.1 0 0 1262.3 278.2 L1308.9 257.5 A65.0 31.8 66.1 0 0 1256.2 138.7 Z" fill="url(#g524)"/><path d="M1086.7 141.0L1325.2 35.3M1090.0 148.5L1328.5 42.8M1093.3 156.0L1331.9 50.3M1096.7 163.6L1335.2 57.8M1100.0 171.1L1338.5 65.4M1103.3 178.6L1341.9 72.9M1106.6 186.1L1345.2 80.4M1110.0 193.6L1348.5 87.9M1113.3 201.1L1351.9 95.4M1116.6 208.7L1355.2 103.0M1120.0 216.2L1358.5 110.5M1123.3 223.7L1361.9 118.0M1126.6 231.2L1365.2 125.5M1130.0 238.7L1368.5 133.0M1133.3 246.3L1371.9 140.6M1136.6 253.8L1375.2 148.1M1140.0 261.3L1378.5 155.6M1143.3 268.8L1381.9 163.1M1146.6 276.3L1385.2 170.6M1150.0 283.9L1388.5 178.2M1153.3 291.4L1391.8 185.7M1156.6 298.9L1395.2 193.2M1160.0 306.4L1398.5 200.7M1163.3 313.9L1401.8 208.2M1166.6 321.5L1405.2 215.8M1170.0 329.0L1408.5 223.3M1173.3 336.5L1411.8 230.8M1176.6 344.0L1415.2 238.3M1179.9 351.5L1418.5 245.8M1183.3 359.1L1421.8 253.4M1186.6 366.6L1425.2 260.9M1189.9 374.1L1428.5 268.4M1193.3 381.6L1431.8 275.9M1231.0 25.3L1442.2 178.7M1226.2 31.9L1437.4 185.3M1221.4 38.6L1432.5 192.0M1216.5 45.2L1427.7 198.6M1211.7 51.9L1422.8 205.3M1206.9 58.5L1418.0 211.9M1202.0 65.2L1413.2 218.6M1197.2 71.8L1408.3 225.3M1192.4 78.5L1403.5 231.9M1187.5 85.2L1398.7 238.6M1182.7 91.8L1393.8 245.2M1177.8 98.5L1389.0 251.9M1173.0 105.1L1384.2 258.5M1168.2 111.8L1379.3 265.2M1163.3 118.4L1374.5 271.8M1158.5 125.1L1369.7 278.5M1153.7 131.7L1364.8 285.2M1148.8 138.4L1360.0 291.8M1144.0 145.1L1355.1 298.5M1139.2 151.7L1350.3 305.1M1134.3 158.4L1345.5 311.8M1129.5 165.0L1340.6 318.4M1124.7 171.7L1335.8 325.1M1119.8 178.3L1331.0 331.7M1115.0 185.0L1326.1 338.4M1110.1 191.6L1321.3 345.1M1105.3 198.3L1316.5 351.7M1100.5 205.0L1311.6 358.4M1095.6 211.6L1306.8 365.0M1090.8 218.3L1302.0 371.7M1086.0 224.9L1297.1 378.3M1081.1 231.6L1292.3 385.0M1076.3 238.2L1287.4 391.7M1403.8 92.4L1376.5 352.0M1395.6 91.6L1368.3 351.1M1387.4 90.7L1360.1 350.3M1379.2 89.8L1352.0 349.4M1371.1 89.0L1343.8 348.6M1362.9 88.1L1335.6 347.7M1354.7 87.3L1327.4 346.8M1346.5 86.4L1319.2 346.0M1338.3 85.5L1311.1 345.1M1330.2 84.7L1302.9 344.3M1322.0 83.8L1294.7 343.4M1313.8 83.0L1286.5 342.5M1305.6 82.1L1278.3 341.7M1297.4 81.2L1270.1 340.8M1289.2 80.4L1262.0 340.0M1281.1 79.5L1253.8 339.1M1272.9 78.7L1245.6 338.2M1264.7 77.8L1237.4 337.4M1256.5 76.9L1229.2 336.5M1248.3 76.1L1221.1 335.7M1240.2 75.2L1212.9 334.8M1232.0 74.4L1204.7 333.9M1223.8 73.5L1196.5 333.1M1215.6 72.6L1188.3 332.2M1207.4 71.8L1180.1 331.4M1199.2 70.9L1172.0 330.5M1191.1 70.1L1163.8 329.6M1182.9 69.2L1155.6 328.8M1174.7 68.3L1147.4 327.9M1166.5 67.5L1139.2 327.1M1158.3 66.6L1131.1 326.2M1150.2 65.8L1122.9 325.3M1142.0 64.9L1114.7 324.5" stroke="#000" stroke-width="0.95" opacity="0.92" clip-path="url(#c524)" fill="none"/><ellipse cx="1235.9" cy="218.8" rx="65.0" ry="31.8" transform="rotate(66.1 1235.9 218.8)" fill="#0a2a10" fill-opacity="0.22" stroke="#000" stroke-width="1.1"/><path d="M1256.2 138.7 L1209.6 159.4 A65.0 31.8 66.1 0 0 1262.3 278.2 L1308.9 257.5 A65.0 31.8 66.1 0 0 1256.2 138.7 Z" fill="none" stroke="#000" stroke-width="1.8"/><defs><clipPath id="c506"><path d="M1216.5 174.9 L1200.0 182.2 A48.0 23.5 66.1 0 0 1238.9 269.9 L1255.4 262.7 A48.0 23.5 66.1 0 0 1216.5 174.9 Z"/></clipPath><linearGradient id="g506" gradientUnits="userSpaceOnUse" x1="1200.0" y1="182.2" x2="1238.9" y2="269.9"><stop offset="0" stop-color="#62c272"/><stop offset="0.5" stop-color="#60bf6f"/><stop offset="1" stop-color="#2f7a3b"/></linearGradient></defs><path d="M1216.5 174.9 L1200.0 182.2 A48.0 23.5 66.1 0 0 1238.9 269.9 L1255.4 262.7 A48.0 23.5 66.1 0 0 1216.5 174.9 Z" fill="url(#g506)"/><path d="M1097.3 167.5L1274.6 88.9M1099.8 173.1L1277.1 94.5M1102.2 178.6L1279.5 100.0M1104.7 184.1L1282.0 105.6M1107.1 189.7L1284.5 111.1M1109.6 195.2L1286.9 116.7M1112.0 200.8L1289.4 122.2M1114.5 206.3L1291.8 127.7M1117.0 211.8L1294.3 133.3M1119.4 217.4L1296.7 138.8M1121.9 222.9L1299.2 144.4M1124.3 228.5L1301.6 149.9M1126.8 234.0L1304.1 155.4M1129.2 239.5L1306.5 161.0M1131.7 245.1L1309.0 166.5M1134.1 250.6L1311.5 172.1M1136.6 256.2L1313.9 177.6M1139.1 261.7L1316.4 183.1M1141.5 267.3L1318.8 188.7M1144.0 272.8L1321.3 194.2M1146.4 278.3L1323.7 199.8M1148.9 283.9L1326.2 205.3M1151.3 289.4L1328.6 210.8M1153.8 295.0L1331.1 216.4M1156.2 300.5L1333.6 221.9M1158.7 306.0L1336.0 227.5M1161.1 311.6L1338.5 233.0M1163.6 317.1L1340.9 238.5M1166.1 322.7L1343.4 244.1M1168.5 328.2L1345.8 249.6M1171.0 333.7L1348.3 255.2M1173.4 339.3L1350.7 260.7M1175.9 344.8L1353.2 266.3M1178.3 350.4L1355.6 271.8M1180.8 355.9L1358.1 277.3M1209.8 82.0L1366.8 196.1M1206.2 86.9L1363.2 201.0M1202.7 91.8L1359.6 205.9M1199.1 96.8L1356.1 210.8M1195.6 101.7L1352.5 215.7M1192.0 106.6L1348.9 220.6M1188.4 111.5L1345.4 225.5M1184.9 116.4L1341.8 230.4M1181.3 121.3L1338.3 235.3M1177.7 126.2L1334.7 240.2M1174.2 131.1L1331.1 245.1M1170.6 136.0L1327.6 250.0M1167.1 140.9L1324.0 254.9M1163.5 145.8L1320.4 259.8M1159.9 150.7L1316.9 264.7M1156.4 155.6L1313.3 269.6M1152.8 160.5L1309.7 274.5M1149.2 165.4L1306.2 279.4M1145.7 170.3L1302.6 284.3M1142.1 175.2L1299.1 289.2M1138.5 180.1L1295.5 294.2M1135.0 185.0L1291.9 299.1M1131.4 189.9L1288.4 304.0M1127.9 194.8L1284.8 308.9M1124.3 199.7L1281.2 313.8M1120.7 204.6L1277.7 318.7M1117.2 209.5L1274.1 323.6M1113.6 214.5L1270.6 328.5M1110.0 219.4L1267.0 333.4M1106.5 224.3L1263.4 338.3M1102.9 229.2L1259.9 343.2M1099.4 234.1L1256.3 348.1M1095.8 239.0L1252.7 353.0M1092.2 243.9L1249.2 357.9M1088.7 248.8L1245.6 362.8M1340.3 136.7L1320.1 329.7M1334.3 136.1L1314.0 329.0M1328.3 135.5L1308.0 328.4M1322.3 134.8L1302.0 327.8M1316.2 134.2L1295.9 327.1M1310.2 133.6L1289.9 326.5M1304.2 132.9L1283.9 325.9M1298.1 132.3L1277.9 325.2M1292.1 131.7L1271.8 324.6M1286.1 131.0L1265.8 324.0M1280.1 130.4L1259.8 323.3M1274.0 129.8L1253.7 322.7M1268.0 129.1L1247.7 322.1M1262.0 128.5L1241.7 321.4M1255.9 127.9L1235.7 320.8M1249.9 127.2L1229.6 320.2M1243.9 126.6L1223.6 319.5M1237.8 126.0L1217.6 318.9M1231.8 125.3L1211.5 318.3M1225.8 124.7L1205.5 317.6M1219.8 124.1L1199.5 317.0M1213.7 123.4L1193.5 316.4M1207.7 122.8L1187.4 315.7M1201.7 122.2L1181.4 315.1M1195.6 121.5L1175.4 314.5M1189.6 120.9L1169.3 313.8M1183.6 120.3L1163.3 313.2M1177.6 119.6L1157.3 312.6M1171.5 119.0L1151.3 311.9M1165.5 118.4L1145.2 311.3M1159.5 117.7L1139.2 310.7M1153.4 117.1L1133.2 310.0M1147.4 116.5L1127.1 309.4M1141.4 115.8L1121.1 308.8M1135.4 115.2L1115.1 308.1" stroke="#000" stroke-width="0.95" opacity="0.92" clip-path="url(#c506)" fill="none"/><ellipse cx="1219.5" cy="226.1" rx="48.0" ry="23.5" transform="rotate(66.1 1219.5 226.1)" fill="#0a2a10" fill-opacity="0.22" stroke="#000" stroke-width="1.1"/><path d="M1216.5 174.9 L1200.0 182.2 A48.0 23.5 66.1 0 0 1238.9 269.9 L1255.4 262.7 A48.0 23.5 66.1 0 0 1216.5 174.9 Z" fill="none" stroke="#000" stroke-width="1.8"/><defs><clipPath id="c418"><path d="M1195.6 172.1 L1115.2 207.8 A59.0 28.9 66.1 0 0 1162.9 315.6 L1243.4 280.0 A59.0 28.9 66.1 0 0 1195.6 172.1 Z"/></clipPath><linearGradient id="g418" gradientUnits="userSpaceOnUse" x1="1115.2" y1="207.8" x2="1162.9" y2="315.6"><stop offset="0" stop-color="#62c272"/><stop offset="0.5" stop-color="#60bf6f"/><stop offset="1" stop-color="#2f7a3b"/></linearGradient></defs><path d="M1195.6 172.1 L1115.2 207.8 A59.0 28.9 66.1 0 0 1162.9 315.6 L1243.4 280.0 A59.0 28.9 66.1 0 0 1195.6 172.1 Z" fill="url(#g418)"/><path d="M988.6 166.5L1250.0 50.6M991.7 173.6L1253.2 57.7M994.9 180.7L1256.3 64.9M998.1 187.8L1259.5 72.0M1001.2 194.9L1262.6 79.1M1004.4 202.1L1265.8 86.2M1007.5 209.2L1268.9 93.4M1010.7 216.3L1272.1 100.5M1013.8 223.4L1275.2 107.6M1017.0 230.6L1278.4 114.7M1020.2 237.7L1281.6 121.9M1023.3 244.8L1284.7 129.0M1026.5 251.9L1287.9 136.1M1029.6 259.1L1291.0 143.2M1032.8 266.2L1294.2 150.4M1035.9 273.3L1297.3 157.5M1039.1 280.4L1300.5 164.6M1042.3 287.6L1303.7 171.7M1045.4 294.7L1306.8 178.9M1048.6 301.8L1310.0 186.0M1051.7 308.9L1313.1 193.1M1054.9 316.1L1316.3 200.2M1058.0 323.2L1319.4 207.3M1061.2 330.3L1322.6 214.5M1064.3 337.4L1325.8 221.6M1067.5 344.5L1328.9 228.7M1070.7 351.7L1332.1 235.8M1073.8 358.8L1335.2 243.0M1077.0 365.9L1338.4 250.1M1080.1 373.0L1341.5 257.2M1083.3 380.2L1344.7 264.3M1086.4 387.3L1347.8 271.5M1089.6 394.4L1351.0 278.6M1092.8 401.5L1354.2 285.7M1095.9 408.7L1357.3 292.8M1099.1 415.8L1360.5 300.0M1102.2 422.9L1363.6 307.1M1105.4 430.0L1366.8 314.2M1108.5 437.2L1369.9 321.3M1150.6 40.0L1382.0 208.1M1146.0 46.3L1377.4 214.4M1141.5 52.6L1372.8 220.8M1136.9 58.9L1368.3 227.1M1132.3 65.3L1363.7 233.4M1127.7 71.6L1359.1 239.7M1123.1 77.9L1354.5 246.0M1118.6 84.2L1349.9 252.3M1114.0 90.5L1345.4 258.6M1109.4 96.8L1340.8 264.9M1104.8 103.1L1336.2 271.2M1100.2 109.4L1331.6 277.5M1095.6 115.7L1327.0 283.8M1091.1 122.0L1322.4 290.1M1086.5 128.3L1317.9 296.4M1081.9 134.6L1313.3 302.7M1077.3 140.9L1308.7 309.0M1072.7 147.2L1304.1 315.3M1068.2 153.5L1299.5 321.6M1063.6 159.8L1295.0 327.9M1059.0 166.1L1290.4 334.2M1054.4 172.4L1285.8 340.6M1049.8 178.8L1281.2 346.9M1045.3 185.1L1276.6 353.2M1040.7 191.4L1272.1 359.5M1036.1 197.7L1267.5 365.8M1031.5 204.0L1262.9 372.1M1026.9 210.3L1258.3 378.4M1022.3 216.6L1253.7 384.7M1017.8 222.9L1249.1 391.0M1013.2 229.2L1244.6 397.3M1008.6 235.5L1240.0 403.6M1004.0 241.8L1235.4 409.9M999.4 248.1L1230.8 416.2M994.9 254.4L1226.2 422.5M990.3 260.7L1221.7 428.8M985.7 267.0L1217.1 435.1M981.1 273.3L1212.5 441.4M976.5 279.6L1207.9 447.7M1341.5 117.2L1311.6 401.6M1333.7 116.3L1303.8 400.8M1326.0 115.5L1296.1 400.0M1318.2 114.7L1288.3 399.1M1310.5 113.9L1280.6 398.3M1302.7 113.1L1272.8 397.5M1295.0 112.3L1265.1 396.7M1287.2 111.4L1257.3 395.9M1279.5 110.6L1249.6 395.1M1271.7 109.8L1241.8 394.3M1264.0 109.0L1234.1 393.4M1256.2 108.2L1226.3 392.6M1248.5 107.4L1218.6 391.8M1240.7 106.6L1210.8 391.0M1233.0 105.7L1203.1 390.2M1225.2 104.9L1195.3 389.4M1217.5 104.1L1187.6 388.6M1209.7 103.3L1179.8 387.7M1202.0 102.5L1172.1 386.9M1194.2 101.7L1164.3 386.1M1186.5 100.9L1156.6 385.3M1178.7 100.0L1148.8 384.5M1171.0 99.2L1141.1 383.7M1163.2 98.4L1133.3 382.8M1155.5 97.6L1125.6 382.0M1147.7 96.8L1117.8 381.2M1140.0 96.0L1110.1 380.4M1132.2 95.2L1102.3 379.6M1124.5 94.3L1094.6 378.8M1116.7 93.5L1086.8 378.0M1109.0 92.7L1079.1 377.1M1101.2 91.9L1071.3 376.3M1093.4 91.1L1063.6 375.5M1085.7 90.3L1055.8 374.7M1077.9 89.5L1048.1 373.9M1070.2 88.6L1040.3 373.1M1062.4 87.8L1032.5 372.3M1054.7 87.0L1024.8 371.4M1046.9 86.2L1017.0 370.6" stroke="#000" stroke-width="0.95" opacity="0.92" clip-path="url(#c418)" fill="none"/><ellipse cx="1139.1" cy="261.7" rx="59.0" ry="28.9" transform="rotate(66.1 1139.1 261.7)" fill="#0a2a10" fill-opacity="0.22" stroke="#000" stroke-width="1.1"/><path d="M1195.6 172.1 L1115.2 207.8 A59.0 28.9 66.1 0 0 1162.9 315.6 L1243.4 280.0 A59.0 28.9 66.1 0 0 1195.6 172.1 Z" fill="none" stroke="#000" stroke-width="1.8"/><defs><clipPath id="c238"><path d="M1124.3 223.4 L957.9 297.1 A41.0 20.1 66.1 0 0 991.1 372.1 L1157.5 298.4 A41.0 20.1 66.1 0 0 1124.3 223.4 Z"/></clipPath><linearGradient id="g238" gradientUnits="userSpaceOnUse" x1="957.9" y1="297.1" x2="991.1" y2="372.1"><stop offset="0" stop-color="#62c272"/><stop offset="0.5" stop-color="#60bf6f"/><stop offset="1" stop-color="#2f7a3b"/></linearGradient></defs><path d="M1124.3 223.4 L957.9 297.1 A41.0 20.1 66.1 0 0 991.1 372.1 L1157.5 298.4 A41.0 20.1 66.1 0 0 1124.3 223.4 Z" fill="url(#g238)"/><path d="M829.8 207.9L1144.2 68.6M832.1 213.1L1146.5 73.7M834.4 218.2L1148.8 78.9M836.7 223.4L1151.1 84.0M838.9 228.5L1153.4 89.2M841.2 233.6L1155.6 94.3M843.5 238.8L1157.9 99.5M845.8 243.9L1160.2 104.6M848.1 249.1L1162.5 109.8M850.3 254.2L1164.8 114.9M852.6 259.4L1167.0 120.1M854.9 264.5L1169.3 125.2M857.2 269.7L1171.6 130.3M859.5 274.8L1173.9 135.5M861.7 280.0L1176.2 140.6M864.0 285.1L1178.4 145.8M866.3 290.2L1180.7 150.9M868.6 295.4L1183.0 156.1M870.9 300.5L1185.3 161.2M873.1 305.7L1187.6 166.4M875.4 310.8L1189.8 171.5M877.7 316.0L1192.1 176.6M880.0 321.1L1194.4 181.8M882.3 326.3L1196.7 186.9M884.5 331.4L1199.0 192.1M886.8 336.5L1201.2 197.2M889.1 341.7L1203.5 202.4M891.4 346.8L1205.8 207.5M893.7 352.0L1208.1 212.7M895.9 357.1L1210.4 217.8M898.2 362.3L1212.6 223.0M900.5 367.4L1214.9 228.1M902.8 372.6L1217.2 233.2M905.1 377.7L1219.5 238.4M907.3 382.8L1221.8 243.5M909.6 388.0L1224.0 248.7M911.9 393.1L1226.3 253.8M914.2 398.3L1228.6 259.0M916.5 403.4L1230.9 264.1M918.7 408.6L1233.2 269.3M921.0 413.7L1235.4 274.4M923.3 418.9L1237.7 279.5M925.6 424.0L1240.0 284.7M927.9 429.2L1242.3 289.8M930.1 434.3L1244.6 295.0M932.4 439.4L1246.8 300.1M934.7 444.6L1249.1 305.3M937.0 449.7L1251.4 310.4M939.3 454.9L1253.7 315.6M941.5 460.0L1255.9 320.7M943.8 465.2L1258.2 325.8M946.1 470.3L1260.5 331.0M948.4 475.5L1262.8 336.1M950.7 480.6L1265.1 341.3M952.9 485.7L1267.3 346.4M955.2 490.9L1269.6 351.6M957.5 496.0L1271.9 356.7M959.8 501.2L1274.2 361.9M962.1 506.3L1276.5 367.0M964.3 511.5L1278.7 372.2M966.6 516.6L1281.0 377.3M968.9 521.8L1283.3 382.4M971.2 526.9L1285.6 387.6M1021.1 55.5L1299.4 257.7M1017.8 60.0L1296.1 262.2M1014.5 64.6L1292.8 266.8M1011.2 69.1L1289.5 271.3M1007.9 73.7L1286.2 275.9M1004.6 78.3L1282.9 280.5M1001.3 82.8L1279.6 285.0M998.0 87.4L1276.3 289.6M994.7 91.9L1273.0 294.1M991.3 96.5L1269.6 298.7M988.0 101.0L1266.3 303.2M984.7 105.6L1263.0 307.8M981.4 110.1L1259.7 312.3M978.1 114.7L1256.4 316.9M974.8 119.2L1253.1 321.4M971.5 123.8L1249.8 326.0M968.2 128.3L1246.5 330.5M964.9 132.9L1243.2 335.1M961.6 137.5L1239.9 339.7M958.3 142.0L1236.6 344.2M955.0 146.6L1233.3 348.8M951.6 151.1L1229.9 353.3M948.3 155.7L1226.6 357.9M945.0 160.2L1223.3 362.4M941.7 164.8L1220.0 367.0M938.4 169.3L1216.7 371.5M935.1 173.9L1213.4 376.1M931.8 178.4L1210.1 380.6M928.5 183.0L1206.8 385.2M925.2 187.5L1203.5 389.7M921.9 192.1L1200.2 394.3M918.6 196.7L1196.9 398.9M915.2 201.2L1193.5 403.4M911.9 205.8L1190.2 408.0M908.6 210.3L1186.9 412.5M905.3 214.9L1183.6 417.1M902.0 219.4L1180.3 421.6M898.7 224.0L1177.0 426.2M895.4 228.5L1173.7 430.7M892.1 233.1L1170.4 435.3M888.8 237.6L1167.1 439.8M885.5 242.2L1163.8 444.4M882.2 246.7L1160.5 448.9M878.9 251.3L1157.2 453.5M875.5 255.9L1153.8 458.1M872.2 260.4L1150.5 462.6M868.9 265.0L1147.2 467.2M865.6 269.5L1143.9 471.7M862.3 274.1L1140.6 476.3M859.0 278.6L1137.3 480.8M855.7 283.2L1134.0 485.4M852.4 287.7L1130.7 489.9M849.1 292.3L1127.4 494.5M845.8 296.8L1124.1 499.0M842.5 301.4L1120.8 503.6M839.1 306.0L1117.4 508.1M835.8 310.5L1114.1 512.7M832.5 315.1L1110.8 517.3M829.2 319.6L1107.5 521.8M825.9 324.2L1104.2 526.4M822.6 328.7L1100.9 530.9M819.3 333.3L1097.6 535.5M816.0 337.8L1094.3 540.0M1249.2 144.9L1213.3 487.1M1243.6 144.3L1207.7 486.5M1238.0 143.8L1202.1 485.9M1232.4 143.2L1196.5 485.3M1226.8 142.6L1190.9 484.7M1221.2 142.0L1185.3 484.1M1215.6 141.4L1179.7 483.5M1210.0 140.8L1174.1 482.9M1204.4 140.2L1168.5 482.3M1198.8 139.6L1162.9 481.8M1193.2 139.1L1157.3 481.2M1187.6 138.5L1151.7 480.6M1182.1 137.9L1146.1 480.0M1176.5 137.3L1140.5 479.4M1170.9 136.7L1134.9 478.8M1165.3 136.1L1129.3 478.2M1159.7 135.5L1123.7 477.6M1154.1 134.9L1118.1 477.1M1148.5 134.3L1112.5 476.5M1142.9 133.8L1106.9 475.9M1137.3 133.2L1101.3 475.3M1131.7 132.6L1095.7 474.7M1126.1 132.0L1090.1 474.1M1120.5 131.4L1084.5 473.5M1114.9 130.8L1078.9 472.9M1109.3 130.2L1073.3 472.3M1103.7 129.6L1067.7 471.8M1098.1 129.1L1062.1 471.2M1092.5 128.5L1056.5 470.6M1086.9 127.9L1050.9 470.0M1081.3 127.3L1045.3 469.4M1075.7 126.7L1039.7 468.8M1070.1 126.1L1034.1 468.2M1064.5 125.5L1028.5 467.6M1058.9 124.9L1022.9 467.0M1053.3 124.3L1017.3 466.5M1047.7 123.8L1011.7 465.9M1042.1 123.2L1006.1 465.3M1036.5 122.6L1000.5 464.7M1030.9 122.0L994.9 464.1M1025.3 121.4L989.3 463.5M1019.7 120.8L983.7 462.9M1014.1 120.2L978.1 462.3M1008.5 119.6L972.5 461.8M1002.9 119.0L967.0 461.2M997.3 118.5L961.4 460.6M991.7 117.9L955.8 460.0M986.1 117.3L950.2 459.4M980.5 116.7L944.6 458.8M974.9 116.1L939.0 458.2M969.3 115.5L933.4 457.6M963.7 114.9L927.8 457.0M958.1 114.3L922.2 456.5M952.5 113.8L916.6 455.9M946.9 113.2L911.0 455.3M941.3 112.6L905.4 454.7M935.7 112.0L899.8 454.1M930.1 111.4L894.2 453.5M924.5 110.8L888.6 452.9M918.9 110.2L883.0 452.3M913.3 109.6L877.4 451.7M907.7 109.0L871.8 451.2M902.1 108.5L866.2 450.6" stroke="#000" stroke-width="0.95" opacity="0.92" clip-path="url(#c238)" fill="none"/><ellipse cx="974.5" cy="334.6" rx="41.0" ry="20.1" transform="rotate(66.1 974.5 334.6)" fill="#0a2a10" fill-opacity="0.22" stroke="#000" stroke-width="1.1"/><path d="M1124.3 223.4 L957.9 297.1 A41.0 20.1 66.1 0 0 991.1 372.1 L1157.5 298.4 A41.0 20.1 66.1 0 0 1124.3 223.4 Z" fill="none" stroke="#000" stroke-width="1.8"/><defs><clipPath id="c0"><path d="M956.4 313.5 L746.2 406.7 A26.6 13.0 66.1 0 0 767.8 455.3 L978.0 362.2 A26.6 13.0 66.1 0 0 956.4 313.5 Z"/></clipPath><linearGradient id="g0" gradientUnits="userSpaceOnUse" x1="746.2" y1="406.7" x2="767.8" y2="455.3"><stop offset="0" stop-color="#62c272"/><stop offset="0.5" stop-color="#60bf6f"/><stop offset="1" stop-color="#2f7a3b"/></linearGradient></defs><path d="M956.4 313.5 L746.2 406.7 A26.6 13.0 66.1 0 0 767.8 455.3 L978.0 362.2 A26.6 13.0 66.1 0 0 956.4 313.5 Z" fill="url(#g0)"/><path d="M622.5 291.8L954.4 144.7M624.6 296.5L956.5 149.4M626.7 301.3L958.6 154.2M628.8 306.0L960.8 158.9M630.9 310.7L962.9 163.7M633.0 315.5L965.0 168.4M635.1 320.2L967.1 173.2M637.2 325.0L969.2 177.9M639.3 329.7L971.3 182.7M641.4 334.5L973.4 187.4M643.5 339.2L975.5 192.1M645.6 344.0L977.6 196.9M647.7 348.7L979.7 201.6M649.8 353.5L981.8 206.4M651.9 358.2L983.9 211.1M654.0 363.0L986.0 215.9M656.1 367.7L988.1 220.6M658.2 372.5L990.2 225.4M660.4 377.2L992.3 230.1M662.5 382.0L994.4 234.9M664.6 386.7L996.5 239.6M666.7 391.5L998.6 244.4M668.8 396.2L1000.7 249.1M670.9 401.0L1002.8 253.9M673.0 405.7L1004.9 258.6M675.1 410.5L1007.0 263.4M677.2 415.2L1009.2 268.1M679.3 420.0L1011.3 272.9M681.4 424.7L1013.4 277.6M683.5 429.5L1015.5 282.4M685.6 434.2L1017.6 287.1M687.7 439.0L1019.7 291.9M689.8 443.7L1021.8 296.6M691.9 448.5L1023.9 301.4M694.0 453.2L1026.0 306.1M696.1 458.0L1028.1 310.9M698.2 462.7L1030.2 315.6M700.3 467.5L1032.3 320.4M702.4 472.2L1034.4 325.1M704.5 477.0L1036.5 329.9M706.6 481.7L1038.6 334.6M708.8 486.5L1040.7 339.4M710.9 491.2L1042.8 344.1M713.0 496.0L1044.9 348.9M715.1 500.7L1047.0 353.6M717.2 505.5L1049.1 358.4M719.3 510.2L1051.2 363.1M721.4 515.0L1053.3 367.9M723.5 519.7L1055.4 372.6M725.6 524.5L1057.6 377.4M727.7 529.2L1059.7 382.1M729.8 534.0L1061.8 386.9M731.9 538.7L1063.9 391.6M734.0 543.5L1066.0 396.4M736.1 548.2L1068.1 401.1M738.2 553.0L1070.2 405.9M740.3 557.7L1072.3 410.6M742.4 562.5L1074.4 415.4M744.5 567.2L1076.5 420.1M746.6 572.0L1078.6 424.9M748.7 576.7L1080.7 429.6M750.8 581.5L1082.8 434.4M752.9 586.2L1084.9 439.1M755.1 590.9L1087.0 443.9M757.2 595.7L1089.1 448.6M759.3 600.4L1091.2 453.4M761.4 605.2L1093.3 458.1M763.5 609.9L1095.4 462.8M765.6 614.7L1097.5 467.6M767.7 619.4L1099.6 472.3M769.8 624.2L1101.7 477.1M822.1 130.6L1115.9 344.0M819.0 134.8L1112.9 348.2M816.0 139.0L1109.8 352.4M812.9 143.2L1106.8 356.6M809.9 147.4L1103.7 360.9M806.8 151.6L1100.7 365.1M803.8 155.8L1097.6 369.3M800.7 160.0L1094.5 373.5M797.7 164.2L1091.5 377.7M794.6 168.4L1088.4 381.9M791.5 172.6L1085.4 386.1M788.5 176.8L1082.3 390.3M785.4 181.0L1079.3 394.5M782.4 185.2L1076.2 398.7M779.3 189.4L1073.2 402.9M776.3 193.6L1070.1 407.1M773.2 197.8L1067.1 411.3M770.2 202.0L1064.0 415.5M767.1 206.2L1060.9 419.7M764.1 210.4L1057.9 423.9M761.0 214.6L1054.8 428.1M758.0 218.8L1051.8 432.3M754.9 223.0L1048.7 436.5M751.8 227.2L1045.7 440.7M748.8 231.4L1042.6 444.9M745.7 235.6L1039.6 449.1M742.7 239.9L1036.5 453.3M739.6 244.1L1033.5 457.5M736.6 248.3L1030.4 461.7M733.5 252.5L1027.4 465.9M730.5 256.7L1024.3 470.1M727.4 260.9L1021.2 474.4M724.4 265.1L1018.2 478.6M721.3 269.3L1015.1 482.8M718.2 273.5L1012.1 487.0M715.2 277.7L1009.0 491.2M712.1 281.9L1006.0 495.4M709.1 286.1L1002.9 499.6M706.0 290.3L999.9 503.8M703.0 294.5L996.8 508.0M699.9 298.7L993.8 512.2M696.9 302.9L990.7 516.4M693.8 307.1L987.6 520.6M690.8 311.3L984.6 524.8M687.7 315.5L981.5 529.0M684.7 319.7L978.5 533.2M681.6 323.9L975.4 537.4M678.5 328.1L972.4 541.6M675.5 332.3L969.3 545.8M672.4 336.5L966.3 550.0M669.4 340.7L963.2 554.2M666.3 344.9L960.2 558.4M663.3 349.1L957.1 562.6M660.2 353.3L954.1 566.8M657.2 357.6L951.0 571.0M654.1 361.8L947.9 575.2M651.1 366.0L944.9 579.4M648.0 370.2L941.8 583.6M644.9 374.4L938.8 587.9M641.9 378.6L935.7 592.1M638.8 382.8L932.7 596.3M635.8 387.0L929.6 600.5M632.7 391.2L926.6 604.7M629.7 395.4L923.5 608.9M626.6 399.6L920.5 613.1M623.6 403.8L917.4 617.3M620.5 408.0L914.3 621.5M617.5 412.2L911.3 625.7M614.4 416.4L908.2 629.9M611.4 420.6L905.2 634.1M608.3 424.8L902.1 638.3M1062.0 222.8L1024.0 584.0M1056.8 222.3L1018.8 583.5M1051.6 221.7L1013.7 583.0M1046.5 221.2L1008.5 582.4M1041.3 220.7L1003.3 581.9M1036.1 220.1L998.2 581.3M1031.0 219.6L993.0 580.8M1025.8 219.0L987.8 580.2M1020.6 218.5L982.7 579.7M1015.4 217.9L977.5 579.2M1010.3 217.4L972.3 578.6M1005.1 216.9L967.1 578.1M999.9 216.3L962.0 577.5M994.8 215.8L956.8 577.0M989.6 215.2L951.6 576.4M984.4 214.7L946.5 575.9M979.3 214.1L941.3 575.3M974.1 213.6L936.1 574.8M968.9 213.1L931.0 574.3M963.8 212.5L925.8 573.7M958.6 212.0L920.6 573.2M953.4 211.4L915.5 572.6M948.3 210.9L910.3 572.1M943.1 210.3L905.1 571.5M937.9 209.8L900.0 571.0M932.8 209.3L894.8 570.5M927.6 208.7L889.6 569.9M922.4 208.2L884.5 569.4M917.3 207.6L879.3 568.8M912.1 207.1L874.1 568.3M906.9 206.5L869.0 567.7M901.8 206.0L863.8 567.2M896.6 205.4L858.6 566.7M891.4 204.9L853.5 566.1M886.3 204.4L848.3 565.6M881.1 203.8L843.1 565.0M875.9 203.3L838.0 564.5M870.8 202.7L832.8 563.9M865.6 202.2L827.6 563.4M860.4 201.6L822.5 562.9M855.3 201.1L817.3 562.3M850.1 200.6L812.1 561.8M844.9 200.0L807.0 561.2M839.8 199.5L801.8 560.7M834.6 198.9L796.6 560.1M829.4 198.4L791.5 559.6M824.2 197.8L786.3 559.1M819.1 197.3L781.1 558.5M813.9 196.8L775.9 558.0M808.7 196.2L770.8 557.4M803.6 195.7L765.6 556.9M798.4 195.1L760.4 556.3M793.2 194.6L755.3 555.8M788.1 194.0L750.1 555.3M782.9 193.5L744.9 554.7M777.7 193.0L739.8 554.2M772.6 192.4L734.6 553.6M767.4 191.9L729.4 553.1M762.2 191.3L724.3 552.5M757.1 190.8L719.1 552.0M751.9 190.2L713.9 551.5M746.7 189.7L708.8 550.9M741.6 189.2L703.6 550.4M736.4 188.6L698.4 549.8M731.2 188.1L693.3 549.3M726.1 187.5L688.1 548.7M720.9 187.0L682.9 548.2M715.7 186.4L677.8 547.7M710.6 185.9L672.6 547.1M705.4 185.4L667.4 546.6M700.2 184.8L662.3 546.0" stroke="#000" stroke-width="0.95" opacity="0.92" clip-path="url(#c0)" fill="none"/><ellipse cx="757.0" cy="431.0" rx="26.6" ry="13.0" transform="rotate(66.1 757.0 431.0)" fill="#0a2a10" fill-opacity="0.22" stroke="#000" stroke-width="1.1"/><path d="M956.4 313.5 L746.2 406.7 A26.6 13.0 66.1 0 0 767.8 455.3 L978.0 362.2 A26.6 13.0 66.1 0 0 956.4 313.5 Z" fill="none" stroke="#000" stroke-width="1.8"/><rect x="1017.5" y="311.5" width="6" height="5" fill="#000" stroke="#fff"/></svg>
<div class="t" style="left:93px;top:112px;font-size:12.7px;color:#111">Дерево модели</div>
<div class="a" style="left:90px;top:130px;width:303px;height:45px;border:1px solid #a0a0a0;background:#fff"></div>
<div class="hdr" style="left:91px;top:131px;width:301px;height:31px;border-bottom:1px solid #a8a8a8"></div>
<div class="vl" style="left:114px;top:131px;height:44px;background:#b8b8b8"></div>
<div class="vl" style="left:271px;top:131px;height:44px;background:#b8b8b8"></div>
<div class="vl" style="left:295px;top:131px;height:44px;background:#b8b8b8"></div>
<div class="vl" style="left:319px;top:131px;height:44px;background:#b8b8b8"></div>
<div class="vl" style="left:343px;top:131px;height:44px;background:#b8b8b8"></div>
<div class="vl" style="left:367px;top:131px;height:44px;background:#b8b8b8"></div>
<div class="t" style="left:95px;top:140px;font-size:15px;color:#222">ID</div>
<div class="t" style="left:119px;top:140px;font-size:15px;color:#222">Наименование</div>
<svg class="a" style="left:187px;top:132px" width="12" height="6"><path d="M1 1L6 5L11 1" stroke="#666" fill="none"/></svg>
<svg class="a" style="left:275px;top:138px" width="18" height="18" viewBox="0 0 18 18"><path d="M1 4H7V14H1M17 4H11V14H17" stroke="#666" fill="none"/></svg>
<svg class="a" style="left:300px;top:138px" width="14" height="18" viewBox="0 0 14 18"><path d="M2 2H12L11 16H3Z" stroke="#666" fill="none"/></svg>
<svg class="a" style="left:322px;top:137px" width="20" height="20" viewBox="0 0 20 20"><path d="M1 5H8M1 8H7M1 11H8" stroke="#666"/><path d="M12 2A2 2 0 0 1 16 2V13A3 3 0 1 1 12 13Z" stroke="#666" fill="none"/></svg>
<svg class="a" style="left:346px;top:138px" width="20" height="18" viewBox="0 0 20 18"><circle cx="10" cy="9" r="4" stroke="#666" fill="none"/><path d="M10 1V3M10 15V17M2 9H4M16 9H18M4 3L5.5 4.5M14.5 13.5L16 15M16 3L14.5 4.5M5.5 13.5L4 15" stroke="#666"/></svg>
<svg class="a" style="left:369px;top:140px" width="22" height="14" viewBox="0 0 22 14"><path d="M1 1V13L5 1L9 13L13 1L17 13L21 1V13" stroke="#666" fill="none"/></svg>
<div class="a" style="left:143px;top:165px;width:15px;height:8px;border:1px solid #555;border-bottom:none"></div>
<svg class="a" style="left:0px;top:930px;z-index:1" width="900" height="35" viewBox="0 930 900 35"><rect x="5" y="938" width="2" height="2" fill="#b4b4b4"/><rect x="5" y="942" width="2" height="2" fill="#b4b4b4"/><rect x="5" y="946" width="2" height="2" fill="#b4b4b4"/><rect x="5" y="950" width="2" height="2" fill="#b4b4b4"/><rect x="5" y="954" width="2" height="2" fill="#b4b4b4"/><rect x="5" y="958" width="2" height="2" fill="#b4b4b4"/><rect x="13.5" y="933.5" width="30" height="28" fill="#c5dcf3" stroke="#9ac0e8"/><rect x="44.5" y="933.5" width="30" height="28" fill="#c5dcf3" stroke="#9ac0e8"/><rect x="137.5" y="933.5" width="30" height="28" fill="#c5dcf3" stroke="#9ac0e8"/><rect x="230.5" y="933.5" width="30" height="28" fill="#c5dcf3" stroke="#9ac0e8"/><rect x="261.5" y="933.5" width="30" height="28" fill="#c5dcf3" stroke="#9ac0e8"/><rect x="554.5" y="933.5" width="30" height="28" fill="#c5dcf3" stroke="#9ac0e8"/><rect x="585.5" y="933.5" width="30" height="28" fill="#c5dcf3" stroke="#9ac0e8"/><rect x="616.5" y="933.5" width="30" height="28" fill="#c5dcf3" stroke="#9ac0e8"/><path d="M28 937 L39 941.5 L28 946 L17 941.5Z" fill="#e8141e"/><path d="M17 941.5 L28 946 L28 959 L17 954.5Z" fill="#b00c12"/><path d="M28 946 L39 941.5 L39 954.5 L28 959Z" fill="#e8141e"/><path d="M28 937 L39 941.5 L39 954.5 L28 959 L17 954.5 L17 941.5Z M17 941.5 L28 946 L39 941.5 M28 946 L28 959" fill="none" stroke="#e8141e" stroke-width="1.3" stroke-linejoin="round"/><path d="M59 937 L70 941.5 L59 946 L48 941.5Z" fill="#d7141c"/><path d="M48 941.5 L59 946 L59 959 L48 954.5Z" fill="#c5dcf3"/><path d="M59 946 L70 941.5 L70 954.5 L59 959Z" fill="#c5dcf3"/><path d="M53.5 943.75V956.75 M48 948 L59 952.5 M64.5 943.75V956.75 M70 948 L59 952.5" stroke="#444" stroke-width="1" fill="none"/><path d="M59 937 L70 941.5 L70 954.5 L59 959 L48 954.5 L48 941.5Z M48 941.5 L59 946 L70 941.5 M59 946 L59 959" fill="none" stroke="#444" stroke-width="1.3" stroke-linejoin="round"/><path d="M90 938 L101 942 L90 946 L79 942Z" fill="#d7141c" stroke="#333" stroke-width="0.6"/><rect x="79" y="947" width="2" height="2" fill="#333"/><rect x="85" y="949" width="2" height="2" fill="#333"/><rect x="93" y="949" width="2" height="2" fill="#333"/><rect x="99" y="947" width="2" height="2" fill="#333"/><rect x="79" y="954" width="2" height="2" fill="#333"/><rect x="85" y="957" width="2" height="2" fill="#333"/><rect x="93" y="957" width="2" height="2" fill="#333"/><rect x="99" y="954" width="2" height="2" fill="#333"/><rect x="89" y="952" width="2" height="2" fill="#333"/><path d="M120 937 L131 941.5 L120 946 L109 941.5Z" fill="#e8aaaa"/><path d="M109 941.5 L120 946 L120 959 L109 954.5Z" fill="#e8aaaa"/><path d="M120 946 L131 941.5 L131 954.5 L120 959Z" fill="#dc9c9c"/><path d="M120 937 L131 941.5 L131 954.5 L120 959 L109 954.5 L109 941.5Z M109 941.5 L120 946 L131 941.5 M120 946 L120 959" fill="none" stroke="#444" stroke-width="1.3" stroke-linejoin="round"/><path d="M120 950L109 954.5 M120 950 L131 954.5 M120 950 V937" stroke="#444" stroke-width="1" fill="none"/><path d="M153 937 L164 941.5 L153 946 L142 941.5Z" fill="#c5dcf3"/><path d="M142 941.5 L153 946 L153 959 L142 954.5Z" fill="#b5d0ee"/><path d="M153 946 L164 941.5 L164 954.5 L153 959Z" fill="#b5d0ee"/><path d="M153 937 L164 941.5 L164 954.5 L153 959 L142 954.5 L142 941.5Z M142 941.5 L153 946 L164 941.5 M153 946 L153 959" fill="none" stroke="#444" stroke-width="1.3" stroke-linejoin="round"/><path d="M183 937 L194 941.5 L183 946 L172 941.5Z" fill="#fff"/><path d="M172 941.5 L183 946 L183 959 L172 954.5Z" fill="#fff"/><path d="M183 946 L194 941.5 L194 954.5 L183 959Z" fill="#fff"/><path d="M183 946V959L189 955V943Z" fill="#999"/><path d="M189 943L195 941V954L189 959Z" fill="#d7141c"/><path d="M183 937 L194 941.5 L194 954.5 L183 959 L172 954.5 L172 941.5Z M172 941.5 L183 946 L194 941.5 M183 946 L183 959" fill="none" stroke="#444" stroke-width="1.3" stroke-linejoin="round"/><path d="M183 950L172 954.5 M183 950 L194 954.5 M183 950 V937" stroke="#444" stroke-width="1" fill="none"/><path d="M213 937 L224 941.5 L213 946 L202 941.5Z" fill="#fff"/><path d="M202 941.5 L213 946 L213 959 L202 954.5Z" fill="#fff"/><path d="M213 946 L224 941.5 L224 954.5 L213 959Z" fill="#fff"/><path d="M210 943L216 946V959L210 955Z" fill="none" stroke="#d7141c" stroke-width="1.6"/><path d="M213 937 L224 941.5 L224 954.5 L213 959 L202 954.5 L202 941.5Z M202 941.5 L213 946 L224 941.5 M213 946 L213 959" fill="none" stroke="#444" stroke-width="1.3" stroke-linejoin="round"/><path d="M213 950L202 954.5 M213 950 L224 954.5 M213 950 V937" stroke="#444" stroke-width="1" fill="none"/><path d="M246 937 L257 941.5 L246 946 L235 941.5Z" fill="#2a4fb0"/><path d="M235 941.5 L246 946 L246 959 L235 954.5Z" fill="#1f3f9a"/><path d="M246 946 L257 941.5 L257 954.5 L246 959Z" fill="#2a4fb0"/><path d="M246 937 L257 941.5 L257 954.5 L246 959 L235 954.5 L235 941.5Z M235 941.5 L246 946 L257 941.5 M246 946 L246 959" fill="none" stroke="#2a4fb0" stroke-width="1.3" stroke-linejoin="round"/><path d="M276 937 L287 941.5 L276 946 L265 941.5Z" fill="#2a5fb5"/><path d="M265 941.5 L276 946 L276 959 L265 954.5Z" fill="#c5dcf3"/><path d="M276 946 L287 941.5 L287 954.5 L276 959Z" fill="#c5dcf3"/><path d="M270.5 943.75V956.75 M265 948 L276 952.5 M281.5 943.75V956.75 M287 948 L276 952.5" stroke="#444" stroke-width="1" fill="none"/><path d="M276 937 L287 941.5 L287 954.5 L276 959 L265 954.5 L265 941.5Z M265 941.5 L276 946 L287 941.5 M276 946 L276 959" fill="none" stroke="#444" stroke-width="1.3" stroke-linejoin="round"/><path d="M307 938 L318 942 L307 946 L296 942Z" fill="#2a5fb5" stroke="#333" stroke-width="0.6"/><rect x="296" y="947" width="2" height="2" fill="#333"/><rect x="302" y="949" width="2" height="2" fill="#333"/><rect x="310" y="949" width="2" height="2" fill="#333"/><rect x="316" y="947" width="2" height="2" fill="#333"/><rect x="296" y="954" width="2" height="2" fill="#333"/><rect x="302" y="957" width="2" height="2" fill="#333"/><rect x="310" y="957" width="2" height="2" fill="#333"/><rect x="316" y="954" width="2" height="2" fill="#333"/><rect x="306" y="952" width="2" height="2" fill="#333"/><path d="M337 937 L348 941.5 L337 946 L326 941.5Z" fill="#a8c4ee"/><path d="M326 941.5 L337 946 L337 959 L326 954.5Z" fill="#9c9ee0"/><path d="M337 946 L348 941.5 L348 954.5 L337 959Z" fill="#a8c4ee"/><path d="M337 937 L348 941.5 L348 954.5 L337 959 L326 954.5 L326 941.5Z M326 941.5 L337 946 L348 941.5 M337 946 L337 959" fill="none" stroke="#444" stroke-width="1.3" stroke-linejoin="round"/><path d="M337 950L326 954.5 M337 950 L348 954.5 M337 950 V937" stroke="#444" stroke-width="1" fill="none"/><path d="M369 937 L380 941.5 L369 946 L358 941.5Z" fill="#fff"/><path d="M358 941.5 L369 946 L369 959 L358 954.5Z" fill="#fff"/><path d="M369 946 L380 941.5 L380 954.5 L369 959Z" fill="#fff"/><path d="M369 937 L380 941.5 L380 954.5 L369 959 L358 954.5 L358 941.5Z M358 941.5 L369 946 L380 941.5 M369 946 L369 959" fill="none" stroke="#444" stroke-width="1.3" stroke-linejoin="round"/><path d="M399 937 L410 941.5 L399 946 L388 941.5Z" fill="#fff"/><path d="M388 941.5 L399 946 L399 959 L388 954.5Z" fill="#fff"/><path d="M399 946 L410 941.5 L410 954.5 L399 959Z" fill="#fff"/><path d="M399 946V959L405 955V943Z" fill="#999"/><path d="M405 943L411 941V954L405 959Z" fill="#2a5fb5"/><path d="M399 937 L410 941.5 L410 954.5 L399 959 L388 954.5 L388 941.5Z M388 941.5 L399 946 L410 941.5 M399 946 L399 959" fill="none" stroke="#444" stroke-width="1.3" stroke-linejoin="round"/><path d="M399 950L388 954.5 M399 950 L410 954.5 M399 950 V937" stroke="#444" stroke-width="1" fill="none"/><path d="M430 937 L441 941.5 L430 946 L419 941.5Z" fill="#fff"/><path d="M419 941.5 L430 946 L430 959 L419 954.5Z" fill="#fff"/><path d="M430 946 L441 941.5 L441 954.5 L430 959Z" fill="#fff"/><path d="M427 943L433 946V959L427 955Z" fill="none" stroke="#2a5fb5" stroke-width="1.6"/><path d="M430 937 L441 941.5 L441 954.5 L430 959 L419 954.5 L419 941.5Z M419 941.5 L430 946 L441 941.5 M430 946 L430 959" fill="none" stroke="#444" stroke-width="1.3" stroke-linejoin="round"/><path d="M430 950L419 954.5 M430 950 L441 954.5 M430 950 V937" stroke="#444" stroke-width="1" fill="none"/><rect x="450" y="936" width="1" height="24" fill="#d0d0d0"/><path d="M469 937 L480 941.5 L469 946 L458 941.5Z" fill="#fff"/><path d="M458 941.5 L469 946 L469 959 L458 954.5Z" fill="#fff"/><path d="M469 946 L480 941.5 L480 954.5 L469 959Z" fill="#fff"/><rect x="468" y="946" width="1.6" height="1.6" fill="#333"/><rect x="468" y="950" width="1.6" height="1.6" fill="#333"/><rect x="468" y="954" width="1.6" height="1.6" fill="#333"/><rect x="472" y="946" width="1.6" height="1.6" fill="#333"/><rect x="472" y="950" width="1.6" height="1.6" fill="#333"/><rect x="472" y="954" width="1.6" height="1.6" fill="#333"/><rect x="476" y="946" width="1.6" height="1.6" fill="#333"/><rect x="476" y="950" width="1.6" height="1.6" fill="#333"/><rect x="476" y="954" width="1.6" height="1.6" fill="#333"/><path d="M469 937 L480 941.5 L480 954.5 L469 959 L458 954.5 L458 941.5Z M458 941.5 L469 946 L480 941.5 M469 946 L469 959" fill="none" stroke="#444" stroke-width="1.3" stroke-linejoin="round"/><path d="M490.5 951A10 10 0 0 1 507 940M510 946A10 10 0 0 1 493 956" stroke="#d7141c" stroke-width="2.2" fill="none"/><path d="M504 936.5L510 939.5L504 943Z M496 960L490 955L497 952.5Z" fill="#d7141c"/><path d="M495 943L501 940L506 942V953L500 956L495 954Z M495 943L500 946L506 942M500 946V956" fill="#fff" stroke="#444" stroke-width="1"/><rect x="502" y="945" width="1.3" height="1.3" fill="#333"/><rect x="502" y="948" width="1.3" height="1.3" fill="#333"/><rect x="502" y="951" width="1.3" height="1.3" fill="#333"/><rect x="504.5" y="945" width="1.3" height="1.3" fill="#333"/><rect x="504.5" y="948" width="1.3" height="1.3" fill="#333"/><rect x="504.5" y="951" width="1.3" height="1.3" fill="#333"/><path d="M522 937V947M519 937H525" stroke="#555" stroke-width="1.2"/><path d="M533 940 L544 944.5 L533 949 L522 944.5Z" fill="#f4f4f4"/><path d="M522 944.5 L533 949 L533 962 L522 957.5Z" fill="#f4f4f4"/><path d="M533 949 L544 944.5 L544 957.5 L533 962Z" fill="#eee"/><rect x="534" y="948" width="1.6" height="1.6" fill="#888"/><rect x="534" y="952" width="1.6" height="1.6" fill="#888"/><rect x="534" y="956" width="1.6" height="1.6" fill="#888"/><rect x="538" y="948" width="1.6" height="1.6" fill="#888"/><rect x="538" y="952" width="1.6" height="1.6" fill="#888"/><rect x="538" y="956" width="1.6" height="1.6" fill="#888"/><rect x="542" y="948" width="1.6" height="1.6" fill="#888"/><rect x="542" y="952" width="1.6" height="1.6" fill="#888"/><rect x="542" y="956" width="1.6" height="1.6" fill="#888"/><path d="M533 940 L544 944.5 L544 957.5 L533 962 L522 957.5 L522 944.5Z M522 944.5 L533 949 L544 944.5 M533 949 L533 962" fill="none" stroke="#888" stroke-width="1.3" stroke-linejoin="round"/><rect x="550" y="936" width="1" height="24" fill="#d0d0d0"/><path d="M570 937 L581 941.5 L570 946 L559 941.5Z" fill="#fff"/><path d="M559 941.5 L570 946 L570 959 L559 954.5Z" fill="#fff"/><path d="M570 946 L581 941.5 L581 954.5 L570 959Z" fill="#777"/><path d="M570 937 L581 941.5 L581 954.5 L570 959 L559 954.5 L559 941.5Z M559 941.5 L570 946 L581 941.5 M570 946 L570 959" fill="none" stroke="#444" stroke-width="1.3" stroke-linejoin="round"/><circle cx="563" cy="941" r="5" fill="#c5dcf3" stroke="#6aa0d8" stroke-dasharray="1.5 1"/><path d="M600 959L609 951V937.5M609 951H624" stroke="#333" stroke-width="1.3" fill="none"/><path d="M606 940L609 935.5L612 940ZM621 948L625.5 951L621 954ZM600 955L598.5 960.5L604 959Z" fill="#333"/><rect x="621.5" y="946.5" width="12" height="12" fill="none" stroke="#444" stroke-width="1.2"/><text x="629" y="945" font-family="Liberation Sans" font-size="10" font-weight="bold" fill="#d7141c">0</text><text x="635" y="945" font-family="Liberation Sans" font-size="10" font-weight="bold" fill="#1ba340">0</text><text x="641" y="945" font-family="Liberation Sans" font-size="10" font-weight="bold" fill="#2a5fb5">0</text><defs><linearGradient id="gdg" x1="0" y1="0" x2="1" y2="1"><stop offset="0" stop-color="#eee"/><stop offset="0.5" stop-color="#999"/><stop offset="1" stop-color="#ddd"/></linearGradient></defs><rect x="650" y="936" width="25" height="24" fill="url(#gdg)"/><path d="M650 960L675 936" stroke="#bbb"/><rect x="683" y="936" width="8" height="24" fill="#ccc"/><rect x="683" y="942" width="8" height="6" fill="#999"/><rect x="683" y="952" width="8" height="6" fill="#aaa"/><path d="M694 939H706M694 943H706M694 947H706M694 951H706M694 955H706M694 959H706" stroke="#555"/><rect x="714" y="936" width="1" height="24" fill="#d0d0d0"/><path d="M764 937 L775 941.5 L764 946 L753 941.5Z" fill="#fff"/><path d="M753 941.5 L764 946 L764 959 L753 954.5Z" fill="#2a5fb5"/><path d="M764 946 L775 941.5 L775 954.5 L764 959Z" fill="#2a5fb5"/><path d="M753 941.5L757 943V957L753 955.5Z" fill="#d7141c"/><path d="M764 937 L775 941.5 L775 954.5 L764 959 L753 954.5 L753 941.5Z M753 941.5 L764 946 L775 941.5 M764 946 L764 959" fill="none" stroke="#555" stroke-width="1.3" stroke-linejoin="round"/><path d="M793 937 L804 941.5 L793 946 L782 941.5Z" fill="#fff"/><path d="M782 941.5 L793 946 L793 959 L782 954.5Z" fill="#fff"/><path d="M793 946 L804 941.5 L804 954.5 L793 959Z" fill="#19a39a"/><path d="M793 937 L804 941.5 L804 954.5 L793 959 L782 954.5 L782 941.5Z M782 941.5 L793 946 L804 941.5 M793 946 L793 959" fill="none" stroke="#555" stroke-width="1.3" stroke-linejoin="round"/><rect x="810.5" y="933.5" width="30" height="28" fill="#c5dcf3" stroke="#9ac0e8"/><path d="M825 937 L836 941.5 L825 946 L814 941.5Z" fill="#fff"/><path d="M814 941.5 L825 946 L825 959 L814 954.5Z" fill="#2a5fb5"/><path d="M825 946 L836 941.5 L836 954.5 L825 959Z" fill="#d96cc0"/><path d="M825 937 L836 941.5 L836 954.5 L825 959 L814 954.5 L814 941.5Z M814 941.5 L825 946 L836 941.5 M825 946 L825 959" fill="none" stroke="#555" stroke-width="1.3" stroke-linejoin="round"/><path d="M861 937 L872 941.5 L861 946 L850 941.5Z" fill="#666"/><path d="M850 941.5 L861 946 L861 959 L850 954.5Z" fill="#555"/><path d="M861 946 L872 941.5 L872 954.5 L861 959Z" fill="#777"/><path d="M861 937 L872 941.5 L872 954.5 L861 959 L850 954.5 L850 941.5Z M850 941.5 L861 946 L872 941.5 M861 946 L861 959" fill="none" stroke="#444" stroke-width="1.3" stroke-linejoin="round"/><path d="M728 940L738 940L744 948L738 957L728 957L722 948Z" fill="#ccc" stroke="#999"/></svg>
<svg class="a" style="left:1347px;top:98px;z-index:1" width="37" height="400" viewBox="1347 98 37 400"><rect x="1354" y="102" width="2" height="2" fill="#b4b4b4"/><rect x="1358" y="102" width="2" height="2" fill="#b4b4b4"/><rect x="1362" y="102" width="2" height="2" fill="#b4b4b4"/><rect x="1366" y="102" width="2" height="2" fill="#b4b4b4"/><rect x="1370" y="102" width="2" height="2" fill="#b4b4b4"/><rect x="1374" y="102" width="2" height="2" fill="#b4b4b4"/><rect x="1378" y="102" width="2" height="2" fill="#b4b4b4"/><path d="M1365 116V129L1356 136M1365 129H1377M1362 119L1365 115L1368 119M1374 126L1378 129L1374 132M1358 131L1355 136L1360 135" stroke="#333" stroke-width="1.2" fill="none"/><path d="M1367 121H1375M1368 121L1369 126H1374L1375 121M1371 126V133" stroke="#d7141c" stroke-width="1.6" fill="none"/><rect x="1353" y="143" width="26" height="1" fill="#d8d8d8"/><text x="1359" y="163" font-family="Liberation Sans" font-weight="bold" font-size="15" fill="#d7141c">X</text><path d="M1352 168L1358 163V166H1363V170H1358V173Z M1380 168L1374 163V166H1369V170H1374V173Z" fill="#aaa" stroke="#555" stroke-width="1"/><path d="M1366 162V174" stroke="#333" stroke-dasharray="1 1"/><text x="1359" y="193" font-family="Liberation Sans" font-weight="bold" font-size="15" fill="#1ba340">Y</text><path d="M1352 199L1358 194V197H1363V201H1358V204Z M1380 199L1374 194V197H1369V201H1374V204Z" fill="#aaa" stroke="#555" stroke-width="1"/><path d="M1366 193V205" stroke="#333" stroke-dasharray="1 1"/><text x="1359" y="223" font-family="Liberation Sans" font-weight="bold" font-size="15" fill="#2a5fb5">Z</text><path d="M1352 228L1358 223V226H1363V230H1358V233Z M1380 228L1374 223V226H1369V230H1374V233Z" fill="#aaa" stroke="#555" stroke-width="1"/><path d="M1366 222V234" stroke="#333" stroke-dasharray="1 1"/><rect x="1353" y="240" width="26" height="1" fill="#d8d8d8"/><rect x="1354.5" y="247.5" width="22" height="22" fill="#fff" stroke="#444" stroke-width="1.2"/><rect x="1365.5" y="258.5" width="9" height="9" fill="none" stroke="#444"/><path d="M1358 251L1366 259" stroke="#d7141c" stroke-width="1.6" stroke-dasharray="2 1"/><path d="M1356 249H1361L1356 254Z" fill="#d7141c"/><rect x="1353" y="277" width="26" height="1" fill="#d8d8d8"/><rect x="1353.5" y="287.5" width="14" height="20" fill="#fff" stroke="#444" stroke-width="1.2"/><path d="M1358 284H1372V300M1372 292H1376" stroke="#d7141c" stroke-width="1.3" fill="none"/><path d="M1375 289L1379 292L1375 295Z" fill="#d7141c"/><path d="M1357 316V322M1374 316V322M1357 319H1374" stroke="#d7141c" stroke-width="1.2"/><rect x="1353.5" y="325.5" width="24" height="9" fill="#ccc" stroke="#666"/><path d="M1358 326V329M1363 326V330M1368 326V329M1373 326V330" stroke="#666"/><rect x="1353" y="343" width="26" height="1" fill="#d8d8d8"/><rect x="1354" y="347" width="2" height="2" fill="#b4b4b4"/><rect x="1358" y="347" width="2" height="2" fill="#b4b4b4"/><rect x="1362" y="347" width="2" height="2" fill="#b4b4b4"/><rect x="1366" y="347" width="2" height="2" fill="#b4b4b4"/><rect x="1370" y="347" width="2" height="2" fill="#b4b4b4"/><rect x="1374" y="347" width="2" height="2" fill="#b4b4b4"/><rect x="1378" y="347" width="2" height="2" fill="#b4b4b4"/><path d="M1355 361V366L1359 371V378Q1359 381 1365 381Q1371 381 1371 378V371L1375 366V361" stroke="#d7141c" stroke-width="2.2" fill="none"/><path d="M1354 393L1366 388L1378 393L1366 398Z" fill="#fff" stroke="#333"/><path d="M1354 393V407L1366 412V398Z" fill="#fff" stroke="#333"/><path d="M1366 398V412L1378 407V393Z" fill="#fff" stroke="#333"/><path d="M1354 393V400L1366 405V398Z M1366 398V405L1378 400V393Z" fill="#d7141c"/><path d="M1360 390.5L1372 395.5M1372 390.5L1360 395.5M1360 395V410M1372 395V410" stroke="#333" stroke-width="0.8"/><rect x="1353" y="418" width="26" height="1" fill="#d8d8d8"/><rect x="1350.5" y="421.5" width="30" height="29" fill="#c5dcf3" stroke="#9ac0e8"/><rect x="1350.5" y="451.5" width="30" height="28" fill="#c5dcf3" stroke="#9ac0e8"/><path d="M1355 429L1366 424L1377 429V442L1366 447L1355 442Z M1355 429L1366 434L1377 429M1366 434V447" fill="#fff" stroke="#444" stroke-width="1.1"/><rect x="1357" y="434" width="7" height="9" fill="#1ba340" opacity="0.9"/><path d="M1358 442L1363 435" stroke="#fff"/><path d="M1368 437L1376 446L1372 446L1374 450" stroke="#444" fill="#fff"/><rect x="1354.5" y="457.5" width="22" height="17" fill="none" stroke="#d7141c" stroke-dasharray="2 1.5"/><path d="M1357 459L1374 468L1367 470L1364 477Z" fill="#999" stroke="#444"/></svg>
<svg class="a" style="left:1370px;top:480px;z-index:1" width="14" height="400" viewBox="1370 480 14 400"><path d="M1372 497L1378 495V511L1372 513Z" fill="#d070c0" stroke="#555" stroke-width="0.6"/><path d="M1372 497L1378 495V499L1372 501Z" fill="#d7141c"/><path d="M1372 531L1377 533V549L1372 547Z" fill="#fff" stroke="#444" stroke-width="0.9"/><path d="M1372 561L1377 563V579L1372 577Z" fill="#fff" stroke="#444" stroke-width="0.9"/><path d="M1372 591L1377 593V609L1372 607Z" fill="#fff" stroke="#444" stroke-width="0.9"/><path d="M1372 641L1376 632L1379 641Z" fill="#1ba340" stroke="#333" stroke-width="0.6"/><path d="M1373 656L1378 662M1378 656L1373 662" stroke="#888"/><path d="M1372 678L1376 669L1379 678Z" fill="none" stroke="#999" stroke-width="0.8"/><path d="M1372 706L1376 697L1379 706Z" fill="none" stroke="#999" stroke-width="0.8"/><path d="M1372 808L1376 799L1379 808Z" fill="none" stroke="#999" stroke-width="0.8"/><path d="M1373 688H1379M1376 688V697" stroke="#777"/><path d="M1373 733L1377 737L1374 745" stroke="#d7141c" stroke-width="2.2" fill="none"/><rect x="1372.5" y="765.5" width="6" height="5" fill="none" stroke="#444"/><rect x="1372.5" y="770.5" width="6" height="5" fill="none" stroke="#444"/><rect x="1372" y="778" width="3" height="5" fill="#d7141c"/><rect x="1376" y="780" width="3" height="3" fill="#d7141c"/><rect x="1372.5" y="820.5" width="5" height="4" fill="none" stroke="#d7141c" stroke-width="1.2"/><rect x="1372.5" y="826.5" width="5" height="4" fill="none" stroke="#d7141c" stroke-width="1.2"/><rect x="1372.5" y="832.5" width="5" height="4" fill="none" stroke="#d7141c" stroke-width="1.2"/><rect x="1372" y="852" width="6" height="22" fill="#d7141c"/><rect x="1371" y="845" width="1" height="10" fill="#d7141c"/></svg>
<svg class="a" style="left:0px;top:98px;z-index:1" width="62" height="834" viewBox="0 98 62 834"><rect x="5" y="102" width="2" height="2" fill="#b4b4b4"/><rect x="9" y="102" width="2" height="2" fill="#b4b4b4"/><rect x="13" y="102" width="2" height="2" fill="#b4b4b4"/><rect x="17" y="102" width="2" height="2" fill="#b4b4b4"/><rect x="21" y="102" width="2" height="2" fill="#b4b4b4"/><rect x="25" y="102" width="2" height="2" fill="#b4b4b4"/><rect x="29" y="102" width="2" height="2" fill="#b4b4b4"/><rect x="33" y="102" width="2" height="2" fill="#b4b4b4"/><rect x="37" y="102" width="2" height="2" fill="#b4b4b4"/><rect x="41" y="102" width="2" height="2" fill="#b4b4b4"/><rect x="45" y="102" width="2" height="2" fill="#b4b4b4"/><path d="M13 124Q25 112 37 124" stroke="#333" stroke-width="1.4" fill="none"/><path d="M12 121L13 126L17 124Z" fill="#333"/><path d="M20.5 125L29.5 137M29.5 125L20.5 137" stroke="#d7141c" stroke-width="2.8"/><path d="M13 153Q25 141 37 153" stroke="#333" stroke-width="1.4" fill="none"/><path d="M38 150L37 155L33 153Z" fill="#333"/><path d="M20.5 154L29.5 166M29.5 154L20.5 166" stroke="#d7141c" stroke-width="2.8"/><text x="11" y="187" font-family="Liberation Sans" font-weight="bold" font-size="12" fill="#333">9</text><text x="11" y="282" font-family="Liberation Sans" font-weight="bold" font-size="12" fill="#333">9</text><text x="11" y="379" font-family="Liberation Sans" font-weight="bold" font-size="12" fill="#333">9</text><rect x="2" y="203" width="15" height="1" fill="#d8d8d8"/><rect x="2" y="300" width="15" height="1" fill="#d8d8d8"/><rect x="2" y="567" width="15" height="1" fill="#d8d8d8"/><path d="M12 219L17 214" stroke="#333" stroke-width="1.6"/><path d="M12 249L17 244" stroke="#333" stroke-width="1.6"/><path d="M12 315L17 310" stroke="#333" stroke-width="1.6"/><path d="M12 345L17 340" stroke="#333" stroke-width="1.6"/><path d="M6 440L17 434V457L6 451Z" fill="#555"/><path d="M15 412A4 4 0 0 1 17 420" stroke="#555" fill="none"/><rect x="1" y="462" width="16" height="8" fill="#fff"/><rect x="4" y="466" width="2" height="2" fill="#b4b4b4"/><rect x="8" y="466" width="2" height="2" fill="#b4b4b4"/><rect x="12" y="466" width="2" height="2" fill="#b4b4b4"/><rect x="16" y="466" width="2" height="2" fill="#b4b4b4"/><path d="M17 486L13 490L17 494Z M13 515L17 519L13 523Z" fill="#444"/><rect x="13.5" y="545.5" width="4" height="6" fill="#ddd" stroke="#555"/><rect x="14" y="588" width="3" height="1" fill="#444"/><rect x="13.5" y="672.5" width="6" height="16" fill="none" stroke="#555"/><path d="M13 678H19M13 683H19" stroke="#555"/><rect x="13.5" y="702.5" width="6" height="16" fill="none" stroke="#555"/><path d="M13 708H19M13 713H19" stroke="#555"/><rect x="13.5" y="732.5" width="6" height="16" fill="none" stroke="#555"/><path d="M13 738H19M13 743H19" stroke="#555"/><circle cx="25" cy="778" r="10" fill="none" stroke="#444" stroke-width="1.3"/><text x="20" y="819" font-family="Liberation Sans" font-weight="bold" font-size="17" fill="#333">0</text><path d="M13 807L17 811L13 815Z M37 807L33 811L37 815Z M22 826L25 822L28 826Z" fill="#333"/><circle cx="23" cy="838" r="9" fill="none" stroke="#333" stroke-width="2"/><path d="M18 838H28" stroke="#333" stroke-width="2"/><path d="M29 844L37 852" stroke="#333" stroke-width="3"/><rect x="10" y="859" width="35" height="1" fill="#d8d8d8"/><path d="M13 872V867H18M32 867H37V872M37 885V890H32M18 890H13V885" stroke="#333" stroke-width="1.3" fill="none"/><circle cx="24" cy="877" r="6.5" fill="none" stroke="#333" stroke-width="1.8"/><path d="M29 882L34 887" stroke="#333" stroke-width="2.5"/></svg>
<svg class="a" style="left:1364px;top:968px;z-index:60" width="20" height="19" viewBox="1364 968 20 19"><rect x="1378" y="970" width="2" height="2" fill="#aaa"/><rect x="1378" y="974" width="2" height="2" fill="#aaa"/><rect x="1378" y="978" width="2" height="2" fill="#aaa"/><rect x="1378" y="982" width="2" height="2" fill="#aaa"/><rect x="1374" y="974" width="2" height="2" fill="#aaa"/><rect x="1374" y="978" width="2" height="2" fill="#aaa"/><rect x="1374" y="982" width="2" height="2" fill="#aaa"/><rect x="1370" y="978" width="2" height="2" fill="#aaa"/><rect x="1370" y="982" width="2" height="2" fill="#aaa"/><rect x="1366" y="982" width="2" height="2" fill="#aaa"/></svg>
</body></html>
